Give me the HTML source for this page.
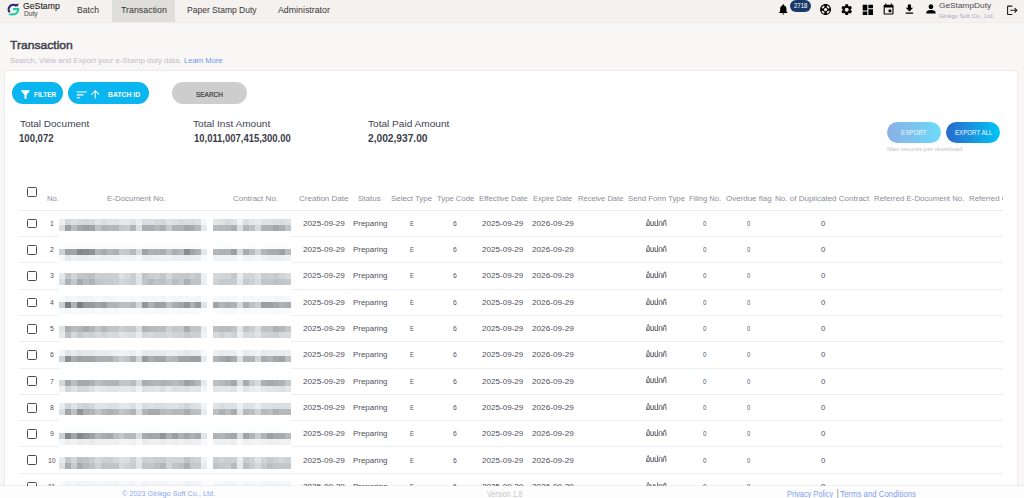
<!DOCTYPE html>
<html><head><meta charset="utf-8"><title>Transaction</title>
<style>
html,body{margin:0;padding:0}
body{width:1024px;height:498px;overflow:hidden;position:relative;background:#f8f7f5;font-family:"Liberation Sans",sans-serif}
.t{position:absolute;white-space:nowrap;transform-origin:0 0;z-index:5}
#hdr{position:absolute;left:0;top:0;width:1024px;height:22px;background:#f4f1ee;box-shadow:0 1px 1px rgba(0,0,0,.035)}
#tab{position:absolute;left:112px;top:0;width:63px;height:22px;background:#dfdedb}
.ic{position:absolute;z-index:6}
#badge{position:absolute;left:789.6px;top:-0.5px;width:21.1px;height:12.6px;border-radius:6.3px;background:#1b3a6c;z-index:4}
#card{position:absolute;left:4px;top:70px;width:1012px;height:440px;background:#fff;border:1px solid #ececf1;border-radius:4px;box-shadow:0 0 2px rgba(40,40,80,.06)}
.btn{position:absolute;top:82px;height:22px;border-radius:11px}
.cb{position:absolute;left:26.9px;width:7.8px;height:7.8px;border:1.25px solid #4a4a4c;border-radius:1.6px;z-index:6;margin-top:-0.2px}
.rl{position:absolute;left:19px;width:984px;height:1px;background:#eeeff5}
#hl{position:absolute;left:19px;top:210px;width:984px;height:1px;background:#e9eaf2}
i{position:absolute;display:block;z-index:3}
#blurbg1{position:absolute;left:59.3px;top:211.5px;width:231.3px;height:261px;background:#fff;z-index:2}
#blurbg2{position:absolute;left:213.1px;top:213px;width:77.6px;height:273px;background:#fff;z-index:2}
.thai{position:absolute;left:646px;z-index:5}
#clip{position:absolute;left:0;top:0;width:1003px;height:498px;overflow:hidden;z-index:5}
#footer{position:absolute;left:0;top:486px;width:1024px;height:12px;background:#fdfdfd;box-shadow:0 -1px 1px rgba(0,0,0,.05);z-index:20}
#footer .t{z-index:21}
#rstrip{position:absolute;left:1018px;top:60px;width:7px;height:430px;background:#f8f7f5;z-index:8}
#hcover{position:absolute;left:1003px;top:185px;width:14px;height:22px;background:#fff;border-right:1px solid #ececf1;z-index:7}
</style></head><body>
<svg width="0" height="0" style="position:absolute">
<defs>
<g id="th" fill="none" stroke="#5c5c68" stroke-width="0.9" stroke-linecap="round" stroke-linejoin="round">
<path d="M0.9 3.2 V6.6 M0.9 4.4 q-0.9 0.3 0 1 M0.9 6.6 H3.2 V2.6"/>
<path d="M1.2 1.9 q0.9-0.7 1.6 0 M2.2 0.4 v0.9"/>
<path d="M4.8 2.6 V6.6 H7.4 V2.6"/>
<path d="M9.0 2.6 V6.6 H11.6 V0.9"/>
<path d="M13.2 6.6 V3.3 q0-0.8 1.2-0.8 h0.4 q1.1 0 1.1 1.1 V6.6"/>
<path d="M17.1 6.6 V3.5 q0-1 1.4-1 q1.5 0 1.5 1.2 V6.6 M17.1 5.2 q0.9 0.3 0.9-0.6"/>
<path d="M17.8 1.6 q1-1.3 2.3-0.1"/>
</g>
</defs></svg>
<div id="hdr"></div>
<div id="tab"></div>
<!-- logo -->
<svg class="ic" style="left:4px;top:1px" width="20" height="18" viewBox="0 0 20 18">
<path d="M12.16 4.88 A4.6 4.6 0 0 0 5.68 11.36" fill="none" stroke="#27257c" stroke-width="2.1"/>
<path d="M11.0 3.4 L14.8 2.6 L13.3 5.9 Z" fill="#27257c"/>
<path d="M9.2 7.0 H15.3 C15.4 11.8 12.6 14.5 8.8 14.5 C7 14.5 5.4 14.1 4.2 13.5 C5.5 12.8 7 12.3 8.8 12.3 C11.2 12.3 12.8 11.2 13.1 9.2 H8.6 Z" fill="#20c9a7"/>
</svg>
<!-- bell -->
<svg class="ic" style="left:776.6px;top:3.4px" width="12.6" height="12.6" viewBox="0 0 24 24"><path d="M12 22c1.1 0 2-.9 2-2h-4c0 1.1.89 2 2 2zm6-6v-5c0-3.07-1.64-5.64-4.5-6.32V4c0-.83-.67-1.5-1.5-1.5s-1.5.67-1.5 1.5v.68C7.63 5.36 6 7.92 6 11v5l-2 2v1h16v-1l-2-2z" fill="#000"/></svg>
<div id="badge"></div>
<!-- lifebuoy -->
<svg class="ic" style="left:818.8px;top:2.8px" width="13.2" height="13.2" viewBox="0 0 24 24"><path d="M12 2C6.48 2 2 6.48 2 12s4.48 10 10 10 10-4.48 10-10S17.52 2 12 2zm7.46 7.12-2.78 1.15c-.51-1.36-1.580-2.44-2.95-2.94l1.15-2.78c2.1.8 3.77 2.47 4.58 4.57zM12 15c-1.66 0-3-1.34-3-3s1.34-3 3-3 3 1.34 3 3-1.34 3-3 3zM9.13 4.54l1.17 2.78c-1.38.5-2.47 1.59-2.98 2.97L4.54 9.13c.81-2.11 2.48-3.78 4.59-4.590zM4.54 14.87l2.78-1.15c.51 1.38 1.59 2.46 2.97 2.96l-1.17 2.78c-2.1-.81-3.77-2.48-4.58-4.59zm10.34 4.59-1.15-2.78c1.37-.51 2.45-1.59 2.95-2.97l2.78 1.17c-.81 2.1-2.48 3.77-4.58 4.58z" fill="#000"/></svg>
<!-- gear -->
<svg class="ic" style="left:839.5px;top:2.8px" width="13.4" height="13.4" viewBox="0 0 24 24"><path d="M19.14 12.94c.04-.3.06-.61.06-.94 0-.32-.02-.64-.07-.94l2.03-1.580c.18-.14.23-.41.12-.61l-1.92-3.32c-.12-.22-.37-.29-.59-.22l-2.39.96c-.5-.38-1.03-.7-1.62-.94l-.36-2.54c-.04-.24-.24-.41-.48-.41h-3.84c-.24 0-.43.17-.47.41l-.36 2.54c-.59.24-1.13.57-1.62.94l-2.39-.96c-.22-.08-.47 0-.59.22L2.74 8.87c-.12.21-.08.47.12.61l2.03 1.58c-.05.3-.09.63-.09.94s.02.64.07.94l-2.03 1.58c-.18.14-.23.41-.12.61l1.92 3.32c.12.22.37.29.59.22l2.39-.96c.5.38 1.03.7 1.62.94l.36 2.54c.05.24.24.41.48.41h3.84c.24 0 .44-.17.47-.41l.36-2.54c.59-.24 1.13-.56 1.62-.94l2.39.96c.22.08.47 0 .59-.22l1.92-3.32c.12-.22.07-.47-.12-.61l-2.01-1.58zM12 15.6c-1.98 0-3.6-1.62-3.6-3.6s1.62-3.6 3.6-3.6 3.6 1.62 3.6 3.6-1.62 3.6-3.6 3.6z" fill="#000"/></svg>
<!-- dashboard -->
<svg class="ic" style="left:860.5px;top:3.1px" width="13.7" height="13.7" viewBox="0 0 24 24"><path d="M3 13h8V3H3v10zm0 8h8v-6H3v6zm10 0h8V11h-8v10zm0-18v6h8V3h-8z" fill="#000"/></svg>
<!-- calendar -->
<svg class="ic" style="left:882px;top:2.95px" width="13.2" height="13.2" viewBox="0 0 24 24"><path d="M17 12h-5v5h5v-5zM16 1v2H8V1H6v2H5c-1.11 0-1.99.9-1.99 2L3 19c0 1.1.89 2 2 2h14c1.1 0 2-.9 2-2V5c0-1.1-.9-2-2-2h-1V1h-2zm3 18H5V8h14v11z" fill="#000"/></svg>
<!-- download -->
<svg class="ic" style="left:902.9px;top:3.2px" width="12.8" height="12.8" viewBox="0 0 24 24"><path d="M19 9h-4V3H9v6H5l7 7 7-7zM5 18v2h14v-2H5z" fill="#000"/></svg>
<!-- person -->
<svg class="ic" style="left:923.6px;top:1.8px" width="13.9" height="13.9" viewBox="0 0 24 24"><path d="M12 12c2.21 0 4-1.79 4-4s-1.790-4-4-4-4 1.79-4 4 1.79 4 4 4zm0 2c-2.67 0-8 1.34-8 4v2h16v-2c0-2.66-5.33-4-8-4z" fill="#000"/></svg>
<!-- logout -->
<svg class="ic" style="left:1006.4px;top:3.9px" width="12.7" height="12.7" viewBox="0 0 24 24"><path d="M17 7l-1.41 1.41L18.17 11H8v2h10.17l-2.58 2.58L17 17l5-5zM4 5h8V3H4c-1.1 0-2 .9-2 2v14c0 1.1.9 2 2 2h8v-2H4V5z" fill="#1a1a1a"/></svg>

<div id="card"></div>
<div id="rstrip"></div><div id="hcover"></div>
<div class="btn" style="left:12px;width:51px;background:#0bb5ef"></div>
<div class="btn" style="left:68px;width:81px;background:#0bb5ef"></div>
<div class="btn" style="left:171.7px;width:75.5px;background:#cdcdcd"></div>
<svg class="ic" style="left:19.2px;top:87.8px" width="13" height="13" viewBox="0 0 24 24"><path d="M4.25 5.61C6.27 8.2 10 13 10 13v6c0 .55.45 1 1 1h2c.55 0 1-.45 1-1v-6s3.72-4.8 5.74-7.390c.51-.66.04-1.61-.79-1.610H5.04c-.83 0-1.3.95-.79 1.61z" fill="#fff"/></svg>
<svg class="ic" style="left:75.2px;top:87.6px" width="13.7" height="13.7" viewBox="0 0 24 24"><path d="M3 18h6v-2H3v2zM3 6v2h18V6H3zm0 7h12v-2H3v2z" fill="#fff"/></svg>
<svg class="ic" style="left:88.9px;top:87.9px" width="12.5" height="12.5" viewBox="0 0 24 24"><path d="M4 12l1.41 1.41L11 7.83V20h2V7.83l5.58 5.59L20 12l-8-8-8 8z" fill="#fff"/></svg>
<div class="btn" style="left:887px;top:122.3px;width:54px;height:20.7px;border-radius:10.4px;background:linear-gradient(90deg,#8aaee6,#6cdbf8)"></div>
<div class="btn" style="left:946.2px;top:122.3px;width:54px;height:20.7px;border-radius:10.4px;background:linear-gradient(90deg,#2a68cd,#01c5f5)"></div>

<div id="hl"></div>
<div class="cb" style="top:187.5px"></div>
<div id="blurbg1"></div>
<div class="cb" style="top:218.80px"></div>
<div class="rl" style="top:236.00px"></div>
<svg class="thai" style="top:218.60px" viewBox="0 0 21 7.4" width="21" height="7.4"><use href="#th"/></svg>
<div class="cb" style="top:245.11px"></div>
<div class="rl" style="top:262.31px"></div>
<svg class="thai" style="top:244.91px" viewBox="0 0 21 7.4" width="21" height="7.4"><use href="#th"/></svg>
<div class="cb" style="top:271.42px"></div>
<div class="rl" style="top:288.62px"></div>
<svg class="thai" style="top:271.22px" viewBox="0 0 21 7.4" width="21" height="7.4"><use href="#th"/></svg>
<div class="cb" style="top:297.73px"></div>
<div class="rl" style="top:314.93px"></div>
<svg class="thai" style="top:297.53px" viewBox="0 0 21 7.4" width="21" height="7.4"><use href="#th"/></svg>
<div class="cb" style="top:324.04px"></div>
<div class="rl" style="top:341.24px"></div>
<svg class="thai" style="top:323.84px" viewBox="0 0 21 7.4" width="21" height="7.4"><use href="#th"/></svg>
<div class="cb" style="top:350.35px"></div>
<div class="rl" style="top:367.55px"></div>
<svg class="thai" style="top:350.15px" viewBox="0 0 21 7.4" width="21" height="7.4"><use href="#th"/></svg>
<div class="cb" style="top:376.66px"></div>
<div class="rl" style="top:393.86px"></div>
<svg class="thai" style="top:376.46px" viewBox="0 0 21 7.4" width="21" height="7.4"><use href="#th"/></svg>
<div class="cb" style="top:402.97px"></div>
<div class="rl" style="top:420.17px"></div>
<svg class="thai" style="top:402.77px" viewBox="0 0 21 7.4" width="21" height="7.4"><use href="#th"/></svg>
<div class="cb" style="top:429.28px"></div>
<div class="rl" style="top:446.48px"></div>
<svg class="thai" style="top:429.08px" viewBox="0 0 21 7.4" width="21" height="7.4"><use href="#th"/></svg>
<div class="cb" style="top:455.59px"></div>
<div class="rl" style="top:472.79px"></div>
<svg class="thai" style="top:455.39px" viewBox="0 0 21 7.4" width="21" height="7.4"><use href="#th"/></svg>
<div class="cb" style="top:481.90px"></div>
<div class="rl" style="top:499.10px"></div>
<svg class="thai" style="top:481.70px" viewBox="0 0 21 7.4" width="21" height="7.4"><use href="#th"/></svg>
<i style="left:59.30px;top:219.20px;width:6.02px;height:6.04px;background:rgb(236,239,242)"></i>
<i style="left:65.22px;top:219.20px;width:6.02px;height:6.04px;background:rgb(214,217,220)"></i>
<i style="left:71.14px;top:219.20px;width:6.02px;height:6.04px;background:rgb(220,223,226)"></i>
<i style="left:77.06px;top:219.20px;width:6.02px;height:6.04px;background:rgb(215,218,221)"></i>
<i style="left:82.98px;top:219.20px;width:6.02px;height:6.04px;background:rgb(212,215,218)"></i>
<i style="left:88.90px;top:219.20px;width:6.02px;height:6.04px;background:rgb(215,218,221)"></i>
<i style="left:94.82px;top:219.20px;width:6.02px;height:6.04px;background:rgb(226,229,232)"></i>
<i style="left:100.74px;top:219.20px;width:6.02px;height:6.04px;background:rgb(219,222,225)"></i>
<i style="left:106.66px;top:219.20px;width:6.02px;height:6.04px;background:rgb(225,228,231)"></i>
<i style="left:112.58px;top:219.20px;width:6.02px;height:6.04px;background:rgb(223,226,229)"></i>
<i style="left:118.50px;top:219.20px;width:6.02px;height:6.04px;background:rgb(231,234,237)"></i>
<i style="left:124.42px;top:219.20px;width:6.02px;height:6.04px;background:rgb(230,233,236)"></i>
<i style="left:130.34px;top:219.20px;width:6.02px;height:6.04px;background:rgb(223,226,229)"></i>
<i style="left:136.26px;top:219.20px;width:6.02px;height:6.04px;background:rgb(235,238,241)"></i>
<i style="left:142.18px;top:219.20px;width:6.02px;height:6.04px;background:rgb(219,222,225)"></i>
<i style="left:148.10px;top:219.20px;width:6.02px;height:6.04px;background:rgb(221,224,227)"></i>
<i style="left:154.02px;top:219.20px;width:6.02px;height:6.04px;background:rgb(215,218,221)"></i>
<i style="left:159.94px;top:219.20px;width:6.02px;height:6.04px;background:rgb(212,215,218)"></i>
<i style="left:165.86px;top:219.20px;width:6.02px;height:6.04px;background:rgb(224,227,230)"></i>
<i style="left:171.78px;top:219.20px;width:6.02px;height:6.04px;background:rgb(220,223,226)"></i>
<i style="left:177.70px;top:219.20px;width:6.02px;height:6.04px;background:rgb(215,218,221)"></i>
<i style="left:183.62px;top:219.20px;width:6.02px;height:6.04px;background:rgb(218,221,224)"></i>
<i style="left:189.54px;top:219.20px;width:6.02px;height:6.04px;background:rgb(215,218,221)"></i>
<i style="left:195.46px;top:219.20px;width:6.02px;height:6.04px;background:rgb(221,224,227)"></i>
<i style="left:201.38px;top:219.20px;width:6.02px;height:6.04px;background:rgb(243,246,249)"></i>
<i style="left:213.10px;top:219.20px;width:6.07px;height:6.04px;background:rgb(226,229,232)"></i>
<i style="left:219.07px;top:219.20px;width:6.07px;height:6.04px;background:rgb(223,226,229)"></i>
<i style="left:225.04px;top:219.20px;width:6.07px;height:6.04px;background:rgb(216,219,222)"></i>
<i style="left:231.01px;top:219.20px;width:6.07px;height:6.04px;background:rgb(222,225,228)"></i>
<i style="left:236.98px;top:219.20px;width:6.07px;height:6.04px;background:rgb(239,242,245)"></i>
<i style="left:242.95px;top:219.20px;width:6.07px;height:6.04px;background:rgb(218,221,224)"></i>
<i style="left:248.92px;top:219.20px;width:6.07px;height:6.04px;background:rgb(227,230,233)"></i>
<i style="left:254.89px;top:219.20px;width:6.07px;height:6.04px;background:rgb(233,236,239)"></i>
<i style="left:260.86px;top:219.20px;width:6.07px;height:6.04px;background:rgb(224,227,230)"></i>
<i style="left:266.83px;top:219.20px;width:6.07px;height:6.04px;background:rgb(223,226,229)"></i>
<i style="left:272.80px;top:219.20px;width:6.07px;height:6.04px;background:rgb(220,223,226)"></i>
<i style="left:278.77px;top:219.20px;width:6.07px;height:6.04px;background:rgb(218,221,224)"></i>
<i style="left:284.74px;top:219.20px;width:6.07px;height:6.04px;background:rgb(224,227,230)"></i>
<i style="left:59.30px;top:225.14px;width:6.02px;height:6.04px;background:rgb(218,221,224)"></i>
<i style="left:65.22px;top:225.14px;width:6.02px;height:6.04px;background:rgb(157,160,163)"></i>
<i style="left:71.14px;top:225.14px;width:6.02px;height:6.04px;background:rgb(185,188,191)"></i>
<i style="left:77.06px;top:225.14px;width:6.02px;height:6.04px;background:rgb(164,167,170)"></i>
<i style="left:82.98px;top:225.14px;width:6.02px;height:6.04px;background:rgb(157,160,163)"></i>
<i style="left:88.90px;top:225.14px;width:6.02px;height:6.04px;background:rgb(162,165,168)"></i>
<i style="left:94.82px;top:225.14px;width:6.02px;height:6.04px;background:rgb(192,195,198)"></i>
<i style="left:100.74px;top:225.14px;width:6.02px;height:6.04px;background:rgb(177,180,183)"></i>
<i style="left:106.66px;top:225.14px;width:6.02px;height:6.04px;background:rgb(182,185,188)"></i>
<i style="left:112.58px;top:225.14px;width:6.02px;height:6.04px;background:rgb(180,183,186)"></i>
<i style="left:118.50px;top:225.14px;width:6.02px;height:6.04px;background:rgb(196,199,202)"></i>
<i style="left:124.42px;top:225.14px;width:6.02px;height:6.04px;background:rgb(201,204,207)"></i>
<i style="left:130.34px;top:225.14px;width:6.02px;height:6.04px;background:rgb(177,180,183)"></i>
<i style="left:136.26px;top:225.14px;width:6.02px;height:6.04px;background:rgb(221,224,227)"></i>
<i style="left:142.18px;top:225.14px;width:6.02px;height:6.04px;background:rgb(172,175,178)"></i>
<i style="left:148.10px;top:225.14px;width:6.02px;height:6.04px;background:rgb(171,174,177)"></i>
<i style="left:154.02px;top:225.14px;width:6.02px;height:6.04px;background:rgb(182,185,188)"></i>
<i style="left:159.94px;top:225.14px;width:6.02px;height:6.04px;background:rgb(174,177,180)"></i>
<i style="left:165.86px;top:225.14px;width:6.02px;height:6.04px;background:rgb(199,202,205)"></i>
<i style="left:171.78px;top:225.14px;width:6.02px;height:6.04px;background:rgb(177,180,183)"></i>
<i style="left:177.70px;top:225.14px;width:6.02px;height:6.04px;background:rgb(175,178,181)"></i>
<i style="left:183.62px;top:225.14px;width:6.02px;height:6.04px;background:rgb(163,166,169)"></i>
<i style="left:189.54px;top:225.14px;width:6.02px;height:6.04px;background:rgb(169,172,175)"></i>
<i style="left:195.46px;top:225.14px;width:6.02px;height:6.04px;background:rgb(183,186,189)"></i>
<i style="left:201.38px;top:225.14px;width:6.02px;height:6.04px;background:rgb(229,232,235)"></i>
<i style="left:213.10px;top:225.14px;width:6.07px;height:6.04px;background:rgb(185,188,191)"></i>
<i style="left:219.07px;top:225.14px;width:6.07px;height:6.04px;background:rgb(182,185,188)"></i>
<i style="left:225.04px;top:225.14px;width:6.07px;height:6.04px;background:rgb(180,183,186)"></i>
<i style="left:231.01px;top:225.14px;width:6.07px;height:6.04px;background:rgb(172,175,178)"></i>
<i style="left:236.98px;top:225.14px;width:6.07px;height:6.04px;background:rgb(220,223,226)"></i>
<i style="left:242.95px;top:225.14px;width:6.07px;height:6.04px;background:rgb(181,184,187)"></i>
<i style="left:248.92px;top:225.14px;width:6.07px;height:6.04px;background:rgb(191,194,197)"></i>
<i style="left:254.89px;top:225.14px;width:6.07px;height:6.04px;background:rgb(216,219,222)"></i>
<i style="left:260.86px;top:225.14px;width:6.07px;height:6.04px;background:rgb(177,180,183)"></i>
<i style="left:266.83px;top:225.14px;width:6.07px;height:6.04px;background:rgb(175,178,181)"></i>
<i style="left:272.80px;top:225.14px;width:6.07px;height:6.04px;background:rgb(164,167,170)"></i>
<i style="left:278.77px;top:225.14px;width:6.07px;height:6.04px;background:rgb(174,177,180)"></i>
<i style="left:284.74px;top:225.14px;width:6.07px;height:6.04px;background:rgb(194,197,200)"></i>
<i style="left:59.30px;top:242.96px;width:6.02px;height:6.04px;background:rgb(252,255,258)"></i>
<i style="left:65.22px;top:242.96px;width:6.02px;height:6.04px;background:rgb(251,254,257)"></i>
<i style="left:71.14px;top:242.96px;width:6.02px;height:6.04px;background:rgb(251,254,257)"></i>
<i style="left:77.06px;top:242.96px;width:6.02px;height:6.04px;background:rgb(251,254,257)"></i>
<i style="left:82.98px;top:242.96px;width:6.02px;height:6.04px;background:rgb(251,254,257)"></i>
<i style="left:88.90px;top:242.96px;width:6.02px;height:6.04px;background:rgb(251,254,257)"></i>
<i style="left:94.82px;top:242.96px;width:6.02px;height:6.04px;background:rgb(251,254,257)"></i>
<i style="left:100.74px;top:242.96px;width:6.02px;height:6.04px;background:rgb(251,254,257)"></i>
<i style="left:106.66px;top:242.96px;width:6.02px;height:6.04px;background:rgb(251,254,257)"></i>
<i style="left:112.58px;top:242.96px;width:6.02px;height:6.04px;background:rgb(251,254,257)"></i>
<i style="left:118.50px;top:242.96px;width:6.02px;height:6.04px;background:rgb(251,254,257)"></i>
<i style="left:124.42px;top:242.96px;width:6.02px;height:6.04px;background:rgb(251,254,257)"></i>
<i style="left:130.34px;top:242.96px;width:6.02px;height:6.04px;background:rgb(251,254,257)"></i>
<i style="left:136.26px;top:242.96px;width:6.02px;height:6.04px;background:rgb(252,255,258)"></i>
<i style="left:142.18px;top:242.96px;width:6.02px;height:6.04px;background:rgb(251,254,257)"></i>
<i style="left:148.10px;top:242.96px;width:6.02px;height:6.04px;background:rgb(251,254,257)"></i>
<i style="left:154.02px;top:242.96px;width:6.02px;height:6.04px;background:rgb(251,254,257)"></i>
<i style="left:159.94px;top:242.96px;width:6.02px;height:6.04px;background:rgb(251,254,257)"></i>
<i style="left:165.86px;top:242.96px;width:6.02px;height:6.04px;background:rgb(251,254,257)"></i>
<i style="left:171.78px;top:242.96px;width:6.02px;height:6.04px;background:rgb(251,254,257)"></i>
<i style="left:177.70px;top:242.96px;width:6.02px;height:6.04px;background:rgb(251,254,257)"></i>
<i style="left:183.62px;top:242.96px;width:6.02px;height:6.04px;background:rgb(251,254,257)"></i>
<i style="left:189.54px;top:242.96px;width:6.02px;height:6.04px;background:rgb(251,254,257)"></i>
<i style="left:195.46px;top:242.96px;width:6.02px;height:6.04px;background:rgb(251,254,257)"></i>
<i style="left:201.38px;top:242.96px;width:6.02px;height:6.04px;background:rgb(252,255,258)"></i>
<i style="left:213.10px;top:242.96px;width:6.07px;height:6.04px;background:rgb(251,254,257)"></i>
<i style="left:219.07px;top:242.96px;width:6.07px;height:6.04px;background:rgb(251,254,257)"></i>
<i style="left:225.04px;top:242.96px;width:6.07px;height:6.04px;background:rgb(251,254,257)"></i>
<i style="left:231.01px;top:242.96px;width:6.07px;height:6.04px;background:rgb(251,254,257)"></i>
<i style="left:236.98px;top:242.96px;width:6.07px;height:6.04px;background:rgb(252,255,258)"></i>
<i style="left:242.95px;top:242.96px;width:6.07px;height:6.04px;background:rgb(251,254,257)"></i>
<i style="left:248.92px;top:242.96px;width:6.07px;height:6.04px;background:rgb(251,254,257)"></i>
<i style="left:254.89px;top:242.96px;width:6.07px;height:6.04px;background:rgb(252,255,258)"></i>
<i style="left:260.86px;top:242.96px;width:6.07px;height:6.04px;background:rgb(251,254,257)"></i>
<i style="left:266.83px;top:242.96px;width:6.07px;height:6.04px;background:rgb(251,254,257)"></i>
<i style="left:272.80px;top:242.96px;width:6.07px;height:6.04px;background:rgb(251,254,257)"></i>
<i style="left:278.77px;top:242.96px;width:6.07px;height:6.04px;background:rgb(251,254,257)"></i>
<i style="left:284.74px;top:242.96px;width:6.07px;height:6.04px;background:rgb(251,254,257)"></i>
<i style="left:59.30px;top:248.90px;width:6.02px;height:6.04px;background:rgb(207,210,213)"></i>
<i style="left:65.22px;top:248.90px;width:6.02px;height:6.04px;background:rgb(158,161,164)"></i>
<i style="left:71.14px;top:248.90px;width:6.02px;height:6.04px;background:rgb(163,166,169)"></i>
<i style="left:77.06px;top:248.90px;width:6.02px;height:6.04px;background:rgb(133,136,139)"></i>
<i style="left:82.98px;top:248.90px;width:6.02px;height:6.04px;background:rgb(137,140,143)"></i>
<i style="left:88.90px;top:248.90px;width:6.02px;height:6.04px;background:rgb(143,146,149)"></i>
<i style="left:94.82px;top:248.90px;width:6.02px;height:6.04px;background:rgb(178,181,184)"></i>
<i style="left:100.74px;top:248.90px;width:6.02px;height:6.04px;background:rgb(168,171,174)"></i>
<i style="left:106.66px;top:248.90px;width:6.02px;height:6.04px;background:rgb(180,183,186)"></i>
<i style="left:112.58px;top:248.90px;width:6.02px;height:6.04px;background:rgb(173,176,179)"></i>
<i style="left:118.50px;top:248.90px;width:6.02px;height:6.04px;background:rgb(199,202,205)"></i>
<i style="left:124.42px;top:248.90px;width:6.02px;height:6.04px;background:rgb(196,199,202)"></i>
<i style="left:130.34px;top:248.90px;width:6.02px;height:6.04px;background:rgb(182,185,188)"></i>
<i style="left:136.26px;top:248.90px;width:6.02px;height:6.04px;background:rgb(215,218,221)"></i>
<i style="left:142.18px;top:248.90px;width:6.02px;height:6.04px;background:rgb(160,163,166)"></i>
<i style="left:148.10px;top:248.90px;width:6.02px;height:6.04px;background:rgb(175,178,181)"></i>
<i style="left:154.02px;top:248.90px;width:6.02px;height:6.04px;background:rgb(173,176,179)"></i>
<i style="left:159.94px;top:248.90px;width:6.02px;height:6.04px;background:rgb(169,172,175)"></i>
<i style="left:165.86px;top:248.90px;width:6.02px;height:6.04px;background:rgb(189,192,195)"></i>
<i style="left:171.78px;top:248.90px;width:6.02px;height:6.04px;background:rgb(171,174,177)"></i>
<i style="left:177.70px;top:248.90px;width:6.02px;height:6.04px;background:rgb(180,183,186)"></i>
<i style="left:183.62px;top:248.90px;width:6.02px;height:6.04px;background:rgb(138,141,144)"></i>
<i style="left:189.54px;top:248.90px;width:6.02px;height:6.04px;background:rgb(161,164,167)"></i>
<i style="left:195.46px;top:248.90px;width:6.02px;height:6.04px;background:rgb(174,177,180)"></i>
<i style="left:201.38px;top:248.90px;width:6.02px;height:6.04px;background:rgb(229,232,235)"></i>
<i style="left:213.10px;top:248.90px;width:6.07px;height:6.04px;background:rgb(179,182,185)"></i>
<i style="left:219.07px;top:248.90px;width:6.07px;height:6.04px;background:rgb(174,177,180)"></i>
<i style="left:225.04px;top:248.90px;width:6.07px;height:6.04px;background:rgb(176,179,182)"></i>
<i style="left:231.01px;top:248.90px;width:6.07px;height:6.04px;background:rgb(157,160,163)"></i>
<i style="left:236.98px;top:248.90px;width:6.07px;height:6.04px;background:rgb(214,217,220)"></i>
<i style="left:242.95px;top:248.90px;width:6.07px;height:6.04px;background:rgb(168,171,174)"></i>
<i style="left:248.92px;top:248.90px;width:6.07px;height:6.04px;background:rgb(184,187,190)"></i>
<i style="left:254.89px;top:248.90px;width:6.07px;height:6.04px;background:rgb(209,212,215)"></i>
<i style="left:260.86px;top:248.90px;width:6.07px;height:6.04px;background:rgb(178,181,184)"></i>
<i style="left:266.83px;top:248.90px;width:6.07px;height:6.04px;background:rgb(169,172,175)"></i>
<i style="left:272.80px;top:248.90px;width:6.07px;height:6.04px;background:rgb(168,171,174)"></i>
<i style="left:278.77px;top:248.90px;width:6.07px;height:6.04px;background:rgb(160,163,166)"></i>
<i style="left:284.74px;top:248.90px;width:6.07px;height:6.04px;background:rgb(186,189,192)"></i>
<i style="left:59.30px;top:254.84px;width:6.02px;height:6.04px;background:rgb(246,249,252)"></i>
<i style="left:65.22px;top:254.84px;width:6.02px;height:6.04px;background:rgb(231,234,237)"></i>
<i style="left:71.14px;top:254.84px;width:6.02px;height:6.04px;background:rgb(238,241,244)"></i>
<i style="left:77.06px;top:254.84px;width:6.02px;height:6.04px;background:rgb(235,238,241)"></i>
<i style="left:82.98px;top:254.84px;width:6.02px;height:6.04px;background:rgb(234,237,240)"></i>
<i style="left:88.90px;top:254.84px;width:6.02px;height:6.04px;background:rgb(237,240,243)"></i>
<i style="left:94.82px;top:254.84px;width:6.02px;height:6.04px;background:rgb(239,242,245)"></i>
<i style="left:100.74px;top:254.84px;width:6.02px;height:6.04px;background:rgb(235,238,241)"></i>
<i style="left:106.66px;top:254.84px;width:6.02px;height:6.04px;background:rgb(237,240,243)"></i>
<i style="left:112.58px;top:254.84px;width:6.02px;height:6.04px;background:rgb(238,241,244)"></i>
<i style="left:118.50px;top:254.84px;width:6.02px;height:6.04px;background:rgb(242,245,248)"></i>
<i style="left:124.42px;top:254.84px;width:6.02px;height:6.04px;background:rgb(241,244,247)"></i>
<i style="left:130.34px;top:254.84px;width:6.02px;height:6.04px;background:rgb(240,243,246)"></i>
<i style="left:136.26px;top:254.84px;width:6.02px;height:6.04px;background:rgb(244,247,250)"></i>
<i style="left:142.18px;top:254.84px;width:6.02px;height:6.04px;background:rgb(235,238,241)"></i>
<i style="left:148.10px;top:254.84px;width:6.02px;height:6.04px;background:rgb(236,239,242)"></i>
<i style="left:154.02px;top:254.84px;width:6.02px;height:6.04px;background:rgb(237,240,243)"></i>
<i style="left:159.94px;top:254.84px;width:6.02px;height:6.04px;background:rgb(238,241,244)"></i>
<i style="left:165.86px;top:254.84px;width:6.02px;height:6.04px;background:rgb(239,242,245)"></i>
<i style="left:171.78px;top:254.84px;width:6.02px;height:6.04px;background:rgb(235,238,241)"></i>
<i style="left:177.70px;top:254.84px;width:6.02px;height:6.04px;background:rgb(236,239,242)"></i>
<i style="left:183.62px;top:254.84px;width:6.02px;height:6.04px;background:rgb(233,236,239)"></i>
<i style="left:189.54px;top:254.84px;width:6.02px;height:6.04px;background:rgb(236,239,242)"></i>
<i style="left:195.46px;top:254.84px;width:6.02px;height:6.04px;background:rgb(236,239,242)"></i>
<i style="left:201.38px;top:254.84px;width:6.02px;height:6.04px;background:rgb(248,251,254)"></i>
<i style="left:213.10px;top:254.84px;width:6.07px;height:6.04px;background:rgb(239,242,245)"></i>
<i style="left:219.07px;top:254.84px;width:6.07px;height:6.04px;background:rgb(239,242,245)"></i>
<i style="left:225.04px;top:254.84px;width:6.07px;height:6.04px;background:rgb(239,242,245)"></i>
<i style="left:231.01px;top:254.84px;width:6.07px;height:6.04px;background:rgb(239,242,245)"></i>
<i style="left:236.98px;top:254.84px;width:6.07px;height:6.04px;background:rgb(247,250,253)"></i>
<i style="left:242.95px;top:254.84px;width:6.07px;height:6.04px;background:rgb(239,242,245)"></i>
<i style="left:248.92px;top:254.84px;width:6.07px;height:6.04px;background:rgb(240,243,246)"></i>
<i style="left:254.89px;top:254.84px;width:6.07px;height:6.04px;background:rgb(243,246,249)"></i>
<i style="left:260.86px;top:254.84px;width:6.07px;height:6.04px;background:rgb(238,241,244)"></i>
<i style="left:266.83px;top:254.84px;width:6.07px;height:6.04px;background:rgb(235,238,241)"></i>
<i style="left:272.80px;top:254.84px;width:6.07px;height:6.04px;background:rgb(234,237,240)"></i>
<i style="left:278.77px;top:254.84px;width:6.07px;height:6.04px;background:rgb(236,239,242)"></i>
<i style="left:284.74px;top:254.84px;width:6.07px;height:6.04px;background:rgb(240,243,246)"></i>
<i style="left:59.30px;top:272.66px;width:6.02px;height:6.04px;background:rgb(230,233,236)"></i>
<i style="left:65.22px;top:272.66px;width:6.02px;height:6.04px;background:rgb(195,198,201)"></i>
<i style="left:71.14px;top:272.66px;width:6.02px;height:6.04px;background:rgb(211,214,217)"></i>
<i style="left:77.06px;top:272.66px;width:6.02px;height:6.04px;background:rgb(195,198,201)"></i>
<i style="left:82.98px;top:272.66px;width:6.02px;height:6.04px;background:rgb(192,195,198)"></i>
<i style="left:88.90px;top:272.66px;width:6.02px;height:6.04px;background:rgb(189,192,195)"></i>
<i style="left:94.82px;top:272.66px;width:6.02px;height:6.04px;background:rgb(204,207,210)"></i>
<i style="left:100.74px;top:272.66px;width:6.02px;height:6.04px;background:rgb(203,206,209)"></i>
<i style="left:106.66px;top:272.66px;width:6.02px;height:6.04px;background:rgb(204,207,210)"></i>
<i style="left:112.58px;top:272.66px;width:6.02px;height:6.04px;background:rgb(205,208,211)"></i>
<i style="left:118.50px;top:272.66px;width:6.02px;height:6.04px;background:rgb(222,225,228)"></i>
<i style="left:124.42px;top:272.66px;width:6.02px;height:6.04px;background:rgb(214,217,220)"></i>
<i style="left:130.34px;top:272.66px;width:6.02px;height:6.04px;background:rgb(203,206,209)"></i>
<i style="left:136.26px;top:272.66px;width:6.02px;height:6.04px;background:rgb(227,230,233)"></i>
<i style="left:142.18px;top:272.66px;width:6.02px;height:6.04px;background:rgb(193,196,199)"></i>
<i style="left:148.10px;top:272.66px;width:6.02px;height:6.04px;background:rgb(202,205,208)"></i>
<i style="left:154.02px;top:272.66px;width:6.02px;height:6.04px;background:rgb(205,208,211)"></i>
<i style="left:159.94px;top:272.66px;width:6.02px;height:6.04px;background:rgb(195,198,201)"></i>
<i style="left:165.86px;top:272.66px;width:6.02px;height:6.04px;background:rgb(213,216,219)"></i>
<i style="left:171.78px;top:272.66px;width:6.02px;height:6.04px;background:rgb(200,203,206)"></i>
<i style="left:177.70px;top:272.66px;width:6.02px;height:6.04px;background:rgb(198,201,204)"></i>
<i style="left:183.62px;top:272.66px;width:6.02px;height:6.04px;background:rgb(196,199,202)"></i>
<i style="left:189.54px;top:272.66px;width:6.02px;height:6.04px;background:rgb(204,207,210)"></i>
<i style="left:195.46px;top:272.66px;width:6.02px;height:6.04px;background:rgb(196,199,202)"></i>
<i style="left:201.38px;top:272.66px;width:6.02px;height:6.04px;background:rgb(237,240,243)"></i>
<i style="left:213.10px;top:272.66px;width:6.07px;height:6.04px;background:rgb(213,216,219)"></i>
<i style="left:219.07px;top:272.66px;width:6.07px;height:6.04px;background:rgb(211,214,217)"></i>
<i style="left:225.04px;top:272.66px;width:6.07px;height:6.04px;background:rgb(209,212,215)"></i>
<i style="left:231.01px;top:272.66px;width:6.07px;height:6.04px;background:rgb(198,201,204)"></i>
<i style="left:236.98px;top:272.66px;width:6.07px;height:6.04px;background:rgb(232,235,238)"></i>
<i style="left:242.95px;top:272.66px;width:6.07px;height:6.04px;background:rgb(209,212,215)"></i>
<i style="left:248.92px;top:272.66px;width:6.07px;height:6.04px;background:rgb(210,213,216)"></i>
<i style="left:254.89px;top:272.66px;width:6.07px;height:6.04px;background:rgb(221,224,227)"></i>
<i style="left:260.86px;top:272.66px;width:6.07px;height:6.04px;background:rgb(202,205,208)"></i>
<i style="left:266.83px;top:272.66px;width:6.07px;height:6.04px;background:rgb(205,208,211)"></i>
<i style="left:272.80px;top:272.66px;width:6.07px;height:6.04px;background:rgb(200,203,206)"></i>
<i style="left:278.77px;top:272.66px;width:6.07px;height:6.04px;background:rgb(210,213,216)"></i>
<i style="left:284.74px;top:272.66px;width:6.07px;height:6.04px;background:rgb(217,220,223)"></i>
<i style="left:59.30px;top:278.60px;width:6.02px;height:6.04px;background:rgb(219,222,225)"></i>
<i style="left:65.22px;top:278.60px;width:6.02px;height:6.04px;background:rgb(174,177,180)"></i>
<i style="left:71.14px;top:278.60px;width:6.02px;height:6.04px;background:rgb(197,200,203)"></i>
<i style="left:77.06px;top:278.60px;width:6.02px;height:6.04px;background:rgb(167,170,173)"></i>
<i style="left:82.98px;top:278.60px;width:6.02px;height:6.04px;background:rgb(183,186,189)"></i>
<i style="left:88.90px;top:278.60px;width:6.02px;height:6.04px;background:rgb(176,179,182)"></i>
<i style="left:94.82px;top:278.60px;width:6.02px;height:6.04px;background:rgb(194,197,200)"></i>
<i style="left:100.74px;top:278.60px;width:6.02px;height:6.04px;background:rgb(198,201,204)"></i>
<i style="left:106.66px;top:278.60px;width:6.02px;height:6.04px;background:rgb(200,203,206)"></i>
<i style="left:112.58px;top:278.60px;width:6.02px;height:6.04px;background:rgb(203,206,209)"></i>
<i style="left:118.50px;top:278.60px;width:6.02px;height:6.04px;background:rgb(213,216,219)"></i>
<i style="left:124.42px;top:278.60px;width:6.02px;height:6.04px;background:rgb(207,210,213)"></i>
<i style="left:130.34px;top:278.60px;width:6.02px;height:6.04px;background:rgb(203,206,209)"></i>
<i style="left:136.26px;top:278.60px;width:6.02px;height:6.04px;background:rgb(225,228,231)"></i>
<i style="left:142.18px;top:278.60px;width:6.02px;height:6.04px;background:rgb(194,197,200)"></i>
<i style="left:148.10px;top:278.60px;width:6.02px;height:6.04px;background:rgb(184,187,190)"></i>
<i style="left:154.02px;top:278.60px;width:6.02px;height:6.04px;background:rgb(192,195,198)"></i>
<i style="left:159.94px;top:278.60px;width:6.02px;height:6.04px;background:rgb(190,193,196)"></i>
<i style="left:165.86px;top:278.60px;width:6.02px;height:6.04px;background:rgb(202,205,208)"></i>
<i style="left:171.78px;top:278.60px;width:6.02px;height:6.04px;background:rgb(187,190,193)"></i>
<i style="left:177.70px;top:278.60px;width:6.02px;height:6.04px;background:rgb(196,199,202)"></i>
<i style="left:183.62px;top:278.60px;width:6.02px;height:6.04px;background:rgb(174,177,180)"></i>
<i style="left:189.54px;top:278.60px;width:6.02px;height:6.04px;background:rgb(192,195,198)"></i>
<i style="left:195.46px;top:278.60px;width:6.02px;height:6.04px;background:rgb(192,195,198)"></i>
<i style="left:201.38px;top:278.60px;width:6.02px;height:6.04px;background:rgb(235,238,241)"></i>
<i style="left:213.10px;top:278.60px;width:6.07px;height:6.04px;background:rgb(207,210,213)"></i>
<i style="left:219.07px;top:278.60px;width:6.07px;height:6.04px;background:rgb(198,201,204)"></i>
<i style="left:225.04px;top:278.60px;width:6.07px;height:6.04px;background:rgb(199,202,205)"></i>
<i style="left:231.01px;top:278.60px;width:6.07px;height:6.04px;background:rgb(202,205,208)"></i>
<i style="left:236.98px;top:278.60px;width:6.07px;height:6.04px;background:rgb(227,230,233)"></i>
<i style="left:242.95px;top:278.60px;width:6.07px;height:6.04px;background:rgb(200,203,206)"></i>
<i style="left:248.92px;top:278.60px;width:6.07px;height:6.04px;background:rgb(206,209,212)"></i>
<i style="left:254.89px;top:278.60px;width:6.07px;height:6.04px;background:rgb(217,220,223)"></i>
<i style="left:260.86px;top:278.60px;width:6.07px;height:6.04px;background:rgb(194,197,200)"></i>
<i style="left:266.83px;top:278.60px;width:6.07px;height:6.04px;background:rgb(196,199,202)"></i>
<i style="left:272.80px;top:278.60px;width:6.07px;height:6.04px;background:rgb(190,193,196)"></i>
<i style="left:278.77px;top:278.60px;width:6.07px;height:6.04px;background:rgb(194,197,200)"></i>
<i style="left:284.74px;top:278.60px;width:6.07px;height:6.04px;background:rgb(198,201,204)"></i>
<i style="left:59.30px;top:296.42px;width:6.02px;height:6.04px;background:rgb(248,251,254)"></i>
<i style="left:65.22px;top:296.42px;width:6.02px;height:6.04px;background:rgb(241,244,247)"></i>
<i style="left:71.14px;top:296.42px;width:6.02px;height:6.04px;background:rgb(245,248,251)"></i>
<i style="left:77.06px;top:296.42px;width:6.02px;height:6.04px;background:rgb(242,245,248)"></i>
<i style="left:82.98px;top:296.42px;width:6.02px;height:6.04px;background:rgb(241,244,247)"></i>
<i style="left:88.90px;top:296.42px;width:6.02px;height:6.04px;background:rgb(242,245,248)"></i>
<i style="left:94.82px;top:296.42px;width:6.02px;height:6.04px;background:rgb(245,248,251)"></i>
<i style="left:100.74px;top:296.42px;width:6.02px;height:6.04px;background:rgb(243,246,249)"></i>
<i style="left:106.66px;top:296.42px;width:6.02px;height:6.04px;background:rgb(243,246,249)"></i>
<i style="left:112.58px;top:296.42px;width:6.02px;height:6.04px;background:rgb(245,248,251)"></i>
<i style="left:118.50px;top:296.42px;width:6.02px;height:6.04px;background:rgb(246,249,252)"></i>
<i style="left:124.42px;top:296.42px;width:6.02px;height:6.04px;background:rgb(246,249,252)"></i>
<i style="left:130.34px;top:296.42px;width:6.02px;height:6.04px;background:rgb(245,248,251)"></i>
<i style="left:136.26px;top:296.42px;width:6.02px;height:6.04px;background:rgb(248,251,254)"></i>
<i style="left:142.18px;top:296.42px;width:6.02px;height:6.04px;background:rgb(243,246,249)"></i>
<i style="left:148.10px;top:296.42px;width:6.02px;height:6.04px;background:rgb(244,247,250)"></i>
<i style="left:154.02px;top:296.42px;width:6.02px;height:6.04px;background:rgb(243,246,249)"></i>
<i style="left:159.94px;top:296.42px;width:6.02px;height:6.04px;background:rgb(242,245,248)"></i>
<i style="left:165.86px;top:296.42px;width:6.02px;height:6.04px;background:rgb(245,248,251)"></i>
<i style="left:171.78px;top:296.42px;width:6.02px;height:6.04px;background:rgb(243,246,249)"></i>
<i style="left:177.70px;top:296.42px;width:6.02px;height:6.04px;background:rgb(243,246,249)"></i>
<i style="left:183.62px;top:296.42px;width:6.02px;height:6.04px;background:rgb(243,246,249)"></i>
<i style="left:189.54px;top:296.42px;width:6.02px;height:6.04px;background:rgb(244,247,250)"></i>
<i style="left:195.46px;top:296.42px;width:6.02px;height:6.04px;background:rgb(243,246,249)"></i>
<i style="left:201.38px;top:296.42px;width:6.02px;height:6.04px;background:rgb(249,252,255)"></i>
<i style="left:213.10px;top:296.42px;width:6.07px;height:6.04px;background:rgb(246,249,252)"></i>
<i style="left:219.07px;top:296.42px;width:6.07px;height:6.04px;background:rgb(245,248,251)"></i>
<i style="left:225.04px;top:296.42px;width:6.07px;height:6.04px;background:rgb(244,247,250)"></i>
<i style="left:231.01px;top:296.42px;width:6.07px;height:6.04px;background:rgb(245,248,251)"></i>
<i style="left:236.98px;top:296.42px;width:6.07px;height:6.04px;background:rgb(249,252,255)"></i>
<i style="left:242.95px;top:296.42px;width:6.07px;height:6.04px;background:rgb(245,248,251)"></i>
<i style="left:248.92px;top:296.42px;width:6.07px;height:6.04px;background:rgb(245,248,251)"></i>
<i style="left:254.89px;top:296.42px;width:6.07px;height:6.04px;background:rgb(247,250,253)"></i>
<i style="left:260.86px;top:296.42px;width:6.07px;height:6.04px;background:rgb(243,246,249)"></i>
<i style="left:266.83px;top:296.42px;width:6.07px;height:6.04px;background:rgb(245,248,251)"></i>
<i style="left:272.80px;top:296.42px;width:6.07px;height:6.04px;background:rgb(243,246,249)"></i>
<i style="left:278.77px;top:296.42px;width:6.07px;height:6.04px;background:rgb(244,247,250)"></i>
<i style="left:284.74px;top:296.42px;width:6.07px;height:6.04px;background:rgb(246,249,252)"></i>
<i style="left:59.30px;top:302.36px;width:6.02px;height:6.04px;background:rgb(203,206,209)"></i>
<i style="left:65.22px;top:302.36px;width:6.02px;height:6.04px;background:rgb(125,128,131)"></i>
<i style="left:71.14px;top:302.36px;width:6.02px;height:6.04px;background:rgb(177,180,183)"></i>
<i style="left:77.06px;top:302.36px;width:6.02px;height:6.04px;background:rgb(124,127,130)"></i>
<i style="left:82.98px;top:302.36px;width:6.02px;height:6.04px;background:rgb(149,152,155)"></i>
<i style="left:88.90px;top:302.36px;width:6.02px;height:6.04px;background:rgb(150,153,156)"></i>
<i style="left:94.82px;top:302.36px;width:6.02px;height:6.04px;background:rgb(162,165,168)"></i>
<i style="left:100.74px;top:302.36px;width:6.02px;height:6.04px;background:rgb(154,157,160)"></i>
<i style="left:106.66px;top:302.36px;width:6.02px;height:6.04px;background:rgb(177,180,183)"></i>
<i style="left:112.58px;top:302.36px;width:6.02px;height:6.04px;background:rgb(176,179,182)"></i>
<i style="left:118.50px;top:302.36px;width:6.02px;height:6.04px;background:rgb(189,192,195)"></i>
<i style="left:124.42px;top:302.36px;width:6.02px;height:6.04px;background:rgb(189,192,195)"></i>
<i style="left:130.34px;top:302.36px;width:6.02px;height:6.04px;background:rgb(180,183,186)"></i>
<i style="left:136.26px;top:302.36px;width:6.02px;height:6.04px;background:rgb(212,215,218)"></i>
<i style="left:142.18px;top:302.36px;width:6.02px;height:6.04px;background:rgb(147,150,153)"></i>
<i style="left:148.10px;top:302.36px;width:6.02px;height:6.04px;background:rgb(174,177,180)"></i>
<i style="left:154.02px;top:302.36px;width:6.02px;height:6.04px;background:rgb(156,159,162)"></i>
<i style="left:159.94px;top:302.36px;width:6.02px;height:6.04px;background:rgb(159,162,165)"></i>
<i style="left:165.86px;top:302.36px;width:6.02px;height:6.04px;background:rgb(189,192,195)"></i>
<i style="left:171.78px;top:302.36px;width:6.02px;height:6.04px;background:rgb(170,173,176)"></i>
<i style="left:177.70px;top:302.36px;width:6.02px;height:6.04px;background:rgb(163,166,169)"></i>
<i style="left:183.62px;top:302.36px;width:6.02px;height:6.04px;background:rgb(147,150,153)"></i>
<i style="left:189.54px;top:302.36px;width:6.02px;height:6.04px;background:rgb(174,177,180)"></i>
<i style="left:195.46px;top:302.36px;width:6.02px;height:6.04px;background:rgb(150,153,156)"></i>
<i style="left:201.38px;top:302.36px;width:6.02px;height:6.04px;background:rgb(224,227,230)"></i>
<i style="left:213.10px;top:302.36px;width:6.07px;height:6.04px;background:rgb(162,165,168)"></i>
<i style="left:219.07px;top:302.36px;width:6.07px;height:6.04px;background:rgb(179,182,185)"></i>
<i style="left:225.04px;top:302.36px;width:6.07px;height:6.04px;background:rgb(170,173,176)"></i>
<i style="left:231.01px;top:302.36px;width:6.07px;height:6.04px;background:rgb(176,179,182)"></i>
<i style="left:236.98px;top:302.36px;width:6.07px;height:6.04px;background:rgb(215,218,221)"></i>
<i style="left:242.95px;top:302.36px;width:6.07px;height:6.04px;background:rgb(171,174,177)"></i>
<i style="left:248.92px;top:302.36px;width:6.07px;height:6.04px;background:rgb(190,193,196)"></i>
<i style="left:254.89px;top:302.36px;width:6.07px;height:6.04px;background:rgb(203,206,209)"></i>
<i style="left:260.86px;top:302.36px;width:6.07px;height:6.04px;background:rgb(156,159,162)"></i>
<i style="left:266.83px;top:302.36px;width:6.07px;height:6.04px;background:rgb(155,158,161)"></i>
<i style="left:272.80px;top:302.36px;width:6.07px;height:6.04px;background:rgb(166,169,172)"></i>
<i style="left:278.77px;top:302.36px;width:6.07px;height:6.04px;background:rgb(175,178,181)"></i>
<i style="left:284.74px;top:302.36px;width:6.07px;height:6.04px;background:rgb(168,171,174)"></i>
<i style="left:59.30px;top:308.30px;width:6.02px;height:6.04px;background:rgb(249,252,255)"></i>
<i style="left:65.22px;top:308.30px;width:6.02px;height:6.04px;background:rgb(245,248,251)"></i>
<i style="left:71.14px;top:308.30px;width:6.02px;height:6.04px;background:rgb(248,251,254)"></i>
<i style="left:77.06px;top:308.30px;width:6.02px;height:6.04px;background:rgb(246,249,252)"></i>
<i style="left:82.98px;top:308.30px;width:6.02px;height:6.04px;background:rgb(245,248,251)"></i>
<i style="left:88.90px;top:308.30px;width:6.02px;height:6.04px;background:rgb(246,249,252)"></i>
<i style="left:94.82px;top:308.30px;width:6.02px;height:6.04px;background:rgb(248,251,254)"></i>
<i style="left:100.74px;top:308.30px;width:6.02px;height:6.04px;background:rgb(246,249,252)"></i>
<i style="left:106.66px;top:308.30px;width:6.02px;height:6.04px;background:rgb(247,250,253)"></i>
<i style="left:112.58px;top:308.30px;width:6.02px;height:6.04px;background:rgb(247,250,253)"></i>
<i style="left:118.50px;top:308.30px;width:6.02px;height:6.04px;background:rgb(249,252,255)"></i>
<i style="left:124.42px;top:308.30px;width:6.02px;height:6.04px;background:rgb(248,251,254)"></i>
<i style="left:130.34px;top:308.30px;width:6.02px;height:6.04px;background:rgb(248,251,254)"></i>
<i style="left:136.26px;top:308.30px;width:6.02px;height:6.04px;background:rgb(249,252,255)"></i>
<i style="left:142.18px;top:308.30px;width:6.02px;height:6.04px;background:rgb(246,249,252)"></i>
<i style="left:148.10px;top:308.30px;width:6.02px;height:6.04px;background:rgb(247,250,253)"></i>
<i style="left:154.02px;top:308.30px;width:6.02px;height:6.04px;background:rgb(246,249,252)"></i>
<i style="left:159.94px;top:308.30px;width:6.02px;height:6.04px;background:rgb(246,249,252)"></i>
<i style="left:165.86px;top:308.30px;width:6.02px;height:6.04px;background:rgb(248,251,254)"></i>
<i style="left:171.78px;top:308.30px;width:6.02px;height:6.04px;background:rgb(247,250,253)"></i>
<i style="left:177.70px;top:308.30px;width:6.02px;height:6.04px;background:rgb(247,250,253)"></i>
<i style="left:183.62px;top:308.30px;width:6.02px;height:6.04px;background:rgb(246,249,252)"></i>
<i style="left:189.54px;top:308.30px;width:6.02px;height:6.04px;background:rgb(247,250,253)"></i>
<i style="left:195.46px;top:308.30px;width:6.02px;height:6.04px;background:rgb(247,250,253)"></i>
<i style="left:201.38px;top:308.30px;width:6.02px;height:6.04px;background:rgb(251,254,257)"></i>
<i style="left:213.10px;top:308.30px;width:6.07px;height:6.04px;background:rgb(248,251,254)"></i>
<i style="left:219.07px;top:308.30px;width:6.07px;height:6.04px;background:rgb(247,250,253)"></i>
<i style="left:225.04px;top:308.30px;width:6.07px;height:6.04px;background:rgb(247,250,253)"></i>
<i style="left:231.01px;top:308.30px;width:6.07px;height:6.04px;background:rgb(246,249,252)"></i>
<i style="left:236.98px;top:308.30px;width:6.07px;height:6.04px;background:rgb(250,253,256)"></i>
<i style="left:242.95px;top:308.30px;width:6.07px;height:6.04px;background:rgb(247,250,253)"></i>
<i style="left:248.92px;top:308.30px;width:6.07px;height:6.04px;background:rgb(248,251,254)"></i>
<i style="left:254.89px;top:308.30px;width:6.07px;height:6.04px;background:rgb(249,252,255)"></i>
<i style="left:260.86px;top:308.30px;width:6.07px;height:6.04px;background:rgb(248,251,254)"></i>
<i style="left:266.83px;top:308.30px;width:6.07px;height:6.04px;background:rgb(247,250,253)"></i>
<i style="left:272.80px;top:308.30px;width:6.07px;height:6.04px;background:rgb(247,250,253)"></i>
<i style="left:278.77px;top:308.30px;width:6.07px;height:6.04px;background:rgb(247,250,253)"></i>
<i style="left:284.74px;top:308.30px;width:6.07px;height:6.04px;background:rgb(248,251,254)"></i>
<i style="left:59.30px;top:326.12px;width:6.02px;height:6.04px;background:rgb(223,226,229)"></i>
<i style="left:65.22px;top:326.12px;width:6.02px;height:6.04px;background:rgb(171,174,177)"></i>
<i style="left:71.14px;top:326.12px;width:6.02px;height:6.04px;background:rgb(185,188,191)"></i>
<i style="left:77.06px;top:326.12px;width:6.02px;height:6.04px;background:rgb(180,183,186)"></i>
<i style="left:82.98px;top:326.12px;width:6.02px;height:6.04px;background:rgb(168,171,174)"></i>
<i style="left:88.90px;top:326.12px;width:6.02px;height:6.04px;background:rgb(179,182,185)"></i>
<i style="left:94.82px;top:326.12px;width:6.02px;height:6.04px;background:rgb(195,198,201)"></i>
<i style="left:100.74px;top:326.12px;width:6.02px;height:6.04px;background:rgb(181,184,187)"></i>
<i style="left:106.66px;top:326.12px;width:6.02px;height:6.04px;background:rgb(193,196,199)"></i>
<i style="left:112.58px;top:326.12px;width:6.02px;height:6.04px;background:rgb(195,198,201)"></i>
<i style="left:118.50px;top:326.12px;width:6.02px;height:6.04px;background:rgb(204,207,210)"></i>
<i style="left:124.42px;top:326.12px;width:6.02px;height:6.04px;background:rgb(197,200,203)"></i>
<i style="left:130.34px;top:326.12px;width:6.02px;height:6.04px;background:rgb(197,200,203)"></i>
<i style="left:136.26px;top:326.12px;width:6.02px;height:6.04px;background:rgb(219,222,225)"></i>
<i style="left:142.18px;top:326.12px;width:6.02px;height:6.04px;background:rgb(176,179,182)"></i>
<i style="left:148.10px;top:326.12px;width:6.02px;height:6.04px;background:rgb(183,186,189)"></i>
<i style="left:154.02px;top:326.12px;width:6.02px;height:6.04px;background:rgb(185,188,191)"></i>
<i style="left:159.94px;top:326.12px;width:6.02px;height:6.04px;background:rgb(186,189,192)"></i>
<i style="left:165.86px;top:326.12px;width:6.02px;height:6.04px;background:rgb(206,209,212)"></i>
<i style="left:171.78px;top:326.12px;width:6.02px;height:6.04px;background:rgb(196,199,202)"></i>
<i style="left:177.70px;top:326.12px;width:6.02px;height:6.04px;background:rgb(198,201,204)"></i>
<i style="left:183.62px;top:326.12px;width:6.02px;height:6.04px;background:rgb(170,173,176)"></i>
<i style="left:189.54px;top:326.12px;width:6.02px;height:6.04px;background:rgb(192,195,198)"></i>
<i style="left:195.46px;top:326.12px;width:6.02px;height:6.04px;background:rgb(194,197,200)"></i>
<i style="left:201.38px;top:326.12px;width:6.02px;height:6.04px;background:rgb(236,239,242)"></i>
<i style="left:213.10px;top:326.12px;width:6.07px;height:6.04px;background:rgb(189,192,195)"></i>
<i style="left:219.07px;top:326.12px;width:6.07px;height:6.04px;background:rgb(185,188,191)"></i>
<i style="left:225.04px;top:326.12px;width:6.07px;height:6.04px;background:rgb(185,188,191)"></i>
<i style="left:231.01px;top:326.12px;width:6.07px;height:6.04px;background:rgb(192,195,198)"></i>
<i style="left:236.98px;top:326.12px;width:6.07px;height:6.04px;background:rgb(229,232,235)"></i>
<i style="left:242.95px;top:326.12px;width:6.07px;height:6.04px;background:rgb(193,196,199)"></i>
<i style="left:248.92px;top:326.12px;width:6.07px;height:6.04px;background:rgb(202,205,208)"></i>
<i style="left:254.89px;top:326.12px;width:6.07px;height:6.04px;background:rgb(219,222,225)"></i>
<i style="left:260.86px;top:326.12px;width:6.07px;height:6.04px;background:rgb(191,194,197)"></i>
<i style="left:266.83px;top:326.12px;width:6.07px;height:6.04px;background:rgb(192,195,198)"></i>
<i style="left:272.80px;top:326.12px;width:6.07px;height:6.04px;background:rgb(175,178,181)"></i>
<i style="left:278.77px;top:326.12px;width:6.07px;height:6.04px;background:rgb(181,184,187)"></i>
<i style="left:284.74px;top:326.12px;width:6.07px;height:6.04px;background:rgb(197,200,203)"></i>
<i style="left:59.30px;top:332.06px;width:6.02px;height:6.04px;background:rgb(232,235,238)"></i>
<i style="left:65.22px;top:332.06px;width:6.02px;height:6.04px;background:rgb(190,193,196)"></i>
<i style="left:71.14px;top:332.06px;width:6.02px;height:6.04px;background:rgb(214,217,220)"></i>
<i style="left:77.06px;top:332.06px;width:6.02px;height:6.04px;background:rgb(199,202,205)"></i>
<i style="left:82.98px;top:332.06px;width:6.02px;height:6.04px;background:rgb(208,211,214)"></i>
<i style="left:88.90px;top:332.06px;width:6.02px;height:6.04px;background:rgb(204,207,210)"></i>
<i style="left:94.82px;top:332.06px;width:6.02px;height:6.04px;background:rgb(214,217,220)"></i>
<i style="left:100.74px;top:332.06px;width:6.02px;height:6.04px;background:rgb(209,212,215)"></i>
<i style="left:106.66px;top:332.06px;width:6.02px;height:6.04px;background:rgb(215,218,221)"></i>
<i style="left:112.58px;top:332.06px;width:6.02px;height:6.04px;background:rgb(214,217,220)"></i>
<i style="left:118.50px;top:332.06px;width:6.02px;height:6.04px;background:rgb(226,229,232)"></i>
<i style="left:124.42px;top:332.06px;width:6.02px;height:6.04px;background:rgb(222,225,228)"></i>
<i style="left:130.34px;top:332.06px;width:6.02px;height:6.04px;background:rgb(218,221,224)"></i>
<i style="left:136.26px;top:332.06px;width:6.02px;height:6.04px;background:rgb(232,235,238)"></i>
<i style="left:142.18px;top:332.06px;width:6.02px;height:6.04px;background:rgb(210,213,216)"></i>
<i style="left:148.10px;top:332.06px;width:6.02px;height:6.04px;background:rgb(214,217,220)"></i>
<i style="left:154.02px;top:332.06px;width:6.02px;height:6.04px;background:rgb(208,211,214)"></i>
<i style="left:159.94px;top:332.06px;width:6.02px;height:6.04px;background:rgb(209,212,215)"></i>
<i style="left:165.86px;top:332.06px;width:6.02px;height:6.04px;background:rgb(215,218,221)"></i>
<i style="left:171.78px;top:332.06px;width:6.02px;height:6.04px;background:rgb(209,212,215)"></i>
<i style="left:177.70px;top:332.06px;width:6.02px;height:6.04px;background:rgb(207,210,213)"></i>
<i style="left:183.62px;top:332.06px;width:6.02px;height:6.04px;background:rgb(198,201,204)"></i>
<i style="left:189.54px;top:332.06px;width:6.02px;height:6.04px;background:rgb(205,208,211)"></i>
<i style="left:195.46px;top:332.06px;width:6.02px;height:6.04px;background:rgb(204,207,210)"></i>
<i style="left:201.38px;top:332.06px;width:6.02px;height:6.04px;background:rgb(240,243,246)"></i>
<i style="left:213.10px;top:332.06px;width:6.07px;height:6.04px;background:rgb(216,219,222)"></i>
<i style="left:219.07px;top:332.06px;width:6.07px;height:6.04px;background:rgb(206,209,212)"></i>
<i style="left:225.04px;top:332.06px;width:6.07px;height:6.04px;background:rgb(214,217,220)"></i>
<i style="left:231.01px;top:332.06px;width:6.07px;height:6.04px;background:rgb(206,209,212)"></i>
<i style="left:236.98px;top:332.06px;width:6.07px;height:6.04px;background:rgb(235,238,241)"></i>
<i style="left:242.95px;top:332.06px;width:6.07px;height:6.04px;background:rgb(215,218,221)"></i>
<i style="left:248.92px;top:332.06px;width:6.07px;height:6.04px;background:rgb(215,218,221)"></i>
<i style="left:254.89px;top:332.06px;width:6.07px;height:6.04px;background:rgb(225,228,231)"></i>
<i style="left:260.86px;top:332.06px;width:6.07px;height:6.04px;background:rgb(209,212,215)"></i>
<i style="left:266.83px;top:332.06px;width:6.07px;height:6.04px;background:rgb(206,209,212)"></i>
<i style="left:272.80px;top:332.06px;width:6.07px;height:6.04px;background:rgb(203,206,209)"></i>
<i style="left:278.77px;top:332.06px;width:6.07px;height:6.04px;background:rgb(215,218,221)"></i>
<i style="left:284.74px;top:332.06px;width:6.07px;height:6.04px;background:rgb(215,218,221)"></i>
<i style="left:59.30px;top:349.88px;width:6.02px;height:6.04px;background:rgb(243,246,249)"></i>
<i style="left:65.22px;top:349.88px;width:6.02px;height:6.04px;background:rgb(226,229,232)"></i>
<i style="left:71.14px;top:349.88px;width:6.02px;height:6.04px;background:rgb(233,236,239)"></i>
<i style="left:77.06px;top:349.88px;width:6.02px;height:6.04px;background:rgb(225,228,231)"></i>
<i style="left:82.98px;top:349.88px;width:6.02px;height:6.04px;background:rgb(229,232,235)"></i>
<i style="left:88.90px;top:349.88px;width:6.02px;height:6.04px;background:rgb(227,230,233)"></i>
<i style="left:94.82px;top:349.88px;width:6.02px;height:6.04px;background:rgb(234,237,240)"></i>
<i style="left:100.74px;top:349.88px;width:6.02px;height:6.04px;background:rgb(232,235,238)"></i>
<i style="left:106.66px;top:349.88px;width:6.02px;height:6.04px;background:rgb(235,238,241)"></i>
<i style="left:112.58px;top:349.88px;width:6.02px;height:6.04px;background:rgb(238,241,244)"></i>
<i style="left:118.50px;top:349.88px;width:6.02px;height:6.04px;background:rgb(240,243,246)"></i>
<i style="left:124.42px;top:349.88px;width:6.02px;height:6.04px;background:rgb(238,241,244)"></i>
<i style="left:130.34px;top:349.88px;width:6.02px;height:6.04px;background:rgb(237,240,243)"></i>
<i style="left:136.26px;top:349.88px;width:6.02px;height:6.04px;background:rgb(242,245,248)"></i>
<i style="left:142.18px;top:349.88px;width:6.02px;height:6.04px;background:rgb(230,233,236)"></i>
<i style="left:148.10px;top:349.88px;width:6.02px;height:6.04px;background:rgb(232,235,238)"></i>
<i style="left:154.02px;top:349.88px;width:6.02px;height:6.04px;background:rgb(231,234,237)"></i>
<i style="left:159.94px;top:349.88px;width:6.02px;height:6.04px;background:rgb(231,234,237)"></i>
<i style="left:165.86px;top:349.88px;width:6.02px;height:6.04px;background:rgb(236,239,242)"></i>
<i style="left:171.78px;top:349.88px;width:6.02px;height:6.04px;background:rgb(236,239,242)"></i>
<i style="left:177.70px;top:349.88px;width:6.02px;height:6.04px;background:rgb(232,235,238)"></i>
<i style="left:183.62px;top:349.88px;width:6.02px;height:6.04px;background:rgb(228,231,234)"></i>
<i style="left:189.54px;top:349.88px;width:6.02px;height:6.04px;background:rgb(233,236,239)"></i>
<i style="left:195.46px;top:349.88px;width:6.02px;height:6.04px;background:rgb(233,236,239)"></i>
<i style="left:201.38px;top:349.88px;width:6.02px;height:6.04px;background:rgb(246,249,252)"></i>
<i style="left:213.10px;top:349.88px;width:6.07px;height:6.04px;background:rgb(237,240,243)"></i>
<i style="left:219.07px;top:349.88px;width:6.07px;height:6.04px;background:rgb(233,236,239)"></i>
<i style="left:225.04px;top:349.88px;width:6.07px;height:6.04px;background:rgb(235,238,241)"></i>
<i style="left:231.01px;top:349.88px;width:6.07px;height:6.04px;background:rgb(236,239,242)"></i>
<i style="left:236.98px;top:349.88px;width:6.07px;height:6.04px;background:rgb(245,248,251)"></i>
<i style="left:242.95px;top:349.88px;width:6.07px;height:6.04px;background:rgb(232,235,238)"></i>
<i style="left:248.92px;top:349.88px;width:6.07px;height:6.04px;background:rgb(238,241,244)"></i>
<i style="left:254.89px;top:349.88px;width:6.07px;height:6.04px;background:rgb(241,244,247)"></i>
<i style="left:260.86px;top:349.88px;width:6.07px;height:6.04px;background:rgb(231,234,237)"></i>
<i style="left:266.83px;top:349.88px;width:6.07px;height:6.04px;background:rgb(233,236,239)"></i>
<i style="left:272.80px;top:349.88px;width:6.07px;height:6.04px;background:rgb(233,236,239)"></i>
<i style="left:278.77px;top:349.88px;width:6.07px;height:6.04px;background:rgb(234,237,240)"></i>
<i style="left:284.74px;top:349.88px;width:6.07px;height:6.04px;background:rgb(235,238,241)"></i>
<i style="left:59.30px;top:355.82px;width:6.02px;height:6.04px;background:rgb(207,210,213)"></i>
<i style="left:65.22px;top:355.82px;width:6.02px;height:6.04px;background:rgb(142,145,148)"></i>
<i style="left:71.14px;top:355.82px;width:6.02px;height:6.04px;background:rgb(171,174,177)"></i>
<i style="left:77.06px;top:355.82px;width:6.02px;height:6.04px;background:rgb(159,162,165)"></i>
<i style="left:82.98px;top:355.82px;width:6.02px;height:6.04px;background:rgb(162,165,168)"></i>
<i style="left:88.90px;top:355.82px;width:6.02px;height:6.04px;background:rgb(162,165,168)"></i>
<i style="left:94.82px;top:355.82px;width:6.02px;height:6.04px;background:rgb(172,175,178)"></i>
<i style="left:100.74px;top:355.82px;width:6.02px;height:6.04px;background:rgb(173,176,179)"></i>
<i style="left:106.66px;top:355.82px;width:6.02px;height:6.04px;background:rgb(171,174,177)"></i>
<i style="left:112.58px;top:355.82px;width:6.02px;height:6.04px;background:rgb(189,192,195)"></i>
<i style="left:118.50px;top:355.82px;width:6.02px;height:6.04px;background:rgb(200,203,206)"></i>
<i style="left:124.42px;top:355.82px;width:6.02px;height:6.04px;background:rgb(194,197,200)"></i>
<i style="left:130.34px;top:355.82px;width:6.02px;height:6.04px;background:rgb(173,176,179)"></i>
<i style="left:136.26px;top:355.82px;width:6.02px;height:6.04px;background:rgb(210,213,216)"></i>
<i style="left:142.18px;top:355.82px;width:6.02px;height:6.04px;background:rgb(153,156,159)"></i>
<i style="left:148.10px;top:355.82px;width:6.02px;height:6.04px;background:rgb(171,174,177)"></i>
<i style="left:154.02px;top:355.82px;width:6.02px;height:6.04px;background:rgb(162,165,168)"></i>
<i style="left:159.94px;top:355.82px;width:6.02px;height:6.04px;background:rgb(163,166,169)"></i>
<i style="left:165.86px;top:355.82px;width:6.02px;height:6.04px;background:rgb(183,186,189)"></i>
<i style="left:171.78px;top:355.82px;width:6.02px;height:6.04px;background:rgb(179,182,185)"></i>
<i style="left:177.70px;top:355.82px;width:6.02px;height:6.04px;background:rgb(161,164,167)"></i>
<i style="left:183.62px;top:355.82px;width:6.02px;height:6.04px;background:rgb(162,165,168)"></i>
<i style="left:189.54px;top:355.82px;width:6.02px;height:6.04px;background:rgb(155,158,161)"></i>
<i style="left:195.46px;top:355.82px;width:6.02px;height:6.04px;background:rgb(157,160,163)"></i>
<i style="left:201.38px;top:355.82px;width:6.02px;height:6.04px;background:rgb(231,234,237)"></i>
<i style="left:213.10px;top:355.82px;width:6.07px;height:6.04px;background:rgb(178,181,184)"></i>
<i style="left:219.07px;top:355.82px;width:6.07px;height:6.04px;background:rgb(166,169,172)"></i>
<i style="left:225.04px;top:355.82px;width:6.07px;height:6.04px;background:rgb(157,160,163)"></i>
<i style="left:231.01px;top:355.82px;width:6.07px;height:6.04px;background:rgb(170,173,176)"></i>
<i style="left:236.98px;top:355.82px;width:6.07px;height:6.04px;background:rgb(222,225,228)"></i>
<i style="left:242.95px;top:355.82px;width:6.07px;height:6.04px;background:rgb(177,180,183)"></i>
<i style="left:248.92px;top:355.82px;width:6.07px;height:6.04px;background:rgb(177,180,183)"></i>
<i style="left:254.89px;top:355.82px;width:6.07px;height:6.04px;background:rgb(209,212,215)"></i>
<i style="left:260.86px;top:355.82px;width:6.07px;height:6.04px;background:rgb(169,172,175)"></i>
<i style="left:266.83px;top:355.82px;width:6.07px;height:6.04px;background:rgb(177,180,183)"></i>
<i style="left:272.80px;top:355.82px;width:6.07px;height:6.04px;background:rgb(163,166,169)"></i>
<i style="left:278.77px;top:355.82px;width:6.07px;height:6.04px;background:rgb(160,163,166)"></i>
<i style="left:284.74px;top:355.82px;width:6.07px;height:6.04px;background:rgb(189,192,195)"></i>
<i style="left:59.30px;top:361.76px;width:6.02px;height:6.04px;background:rgb(252,255,258)"></i>
<i style="left:65.22px;top:361.76px;width:6.02px;height:6.04px;background:rgb(252,255,258)"></i>
<i style="left:71.14px;top:361.76px;width:6.02px;height:6.04px;background:rgb(252,255,258)"></i>
<i style="left:77.06px;top:361.76px;width:6.02px;height:6.04px;background:rgb(252,255,258)"></i>
<i style="left:82.98px;top:361.76px;width:6.02px;height:6.04px;background:rgb(252,255,258)"></i>
<i style="left:88.90px;top:361.76px;width:6.02px;height:6.04px;background:rgb(252,255,258)"></i>
<i style="left:94.82px;top:361.76px;width:6.02px;height:6.04px;background:rgb(252,255,258)"></i>
<i style="left:100.74px;top:361.76px;width:6.02px;height:6.04px;background:rgb(252,255,258)"></i>
<i style="left:106.66px;top:361.76px;width:6.02px;height:6.04px;background:rgb(252,255,258)"></i>
<i style="left:112.58px;top:361.76px;width:6.02px;height:6.04px;background:rgb(252,255,258)"></i>
<i style="left:118.50px;top:361.76px;width:6.02px;height:6.04px;background:rgb(252,255,258)"></i>
<i style="left:124.42px;top:361.76px;width:6.02px;height:6.04px;background:rgb(252,255,258)"></i>
<i style="left:130.34px;top:361.76px;width:6.02px;height:6.04px;background:rgb(252,255,258)"></i>
<i style="left:136.26px;top:361.76px;width:6.02px;height:6.04px;background:rgb(252,255,258)"></i>
<i style="left:142.18px;top:361.76px;width:6.02px;height:6.04px;background:rgb(252,255,258)"></i>
<i style="left:148.10px;top:361.76px;width:6.02px;height:6.04px;background:rgb(252,255,258)"></i>
<i style="left:154.02px;top:361.76px;width:6.02px;height:6.04px;background:rgb(252,255,258)"></i>
<i style="left:159.94px;top:361.76px;width:6.02px;height:6.04px;background:rgb(252,255,258)"></i>
<i style="left:165.86px;top:361.76px;width:6.02px;height:6.04px;background:rgb(252,255,258)"></i>
<i style="left:171.78px;top:361.76px;width:6.02px;height:6.04px;background:rgb(252,255,258)"></i>
<i style="left:177.70px;top:361.76px;width:6.02px;height:6.04px;background:rgb(252,255,258)"></i>
<i style="left:183.62px;top:361.76px;width:6.02px;height:6.04px;background:rgb(252,255,258)"></i>
<i style="left:189.54px;top:361.76px;width:6.02px;height:6.04px;background:rgb(252,255,258)"></i>
<i style="left:195.46px;top:361.76px;width:6.02px;height:6.04px;background:rgb(252,255,258)"></i>
<i style="left:201.38px;top:361.76px;width:6.02px;height:6.04px;background:rgb(252,255,258)"></i>
<i style="left:213.10px;top:361.76px;width:6.07px;height:6.04px;background:rgb(252,255,258)"></i>
<i style="left:219.07px;top:361.76px;width:6.07px;height:6.04px;background:rgb(252,255,258)"></i>
<i style="left:225.04px;top:361.76px;width:6.07px;height:6.04px;background:rgb(252,255,258)"></i>
<i style="left:231.01px;top:361.76px;width:6.07px;height:6.04px;background:rgb(252,255,258)"></i>
<i style="left:236.98px;top:361.76px;width:6.07px;height:6.04px;background:rgb(252,255,258)"></i>
<i style="left:242.95px;top:361.76px;width:6.07px;height:6.04px;background:rgb(252,255,258)"></i>
<i style="left:248.92px;top:361.76px;width:6.07px;height:6.04px;background:rgb(252,255,258)"></i>
<i style="left:254.89px;top:361.76px;width:6.07px;height:6.04px;background:rgb(252,255,258)"></i>
<i style="left:260.86px;top:361.76px;width:6.07px;height:6.04px;background:rgb(252,255,258)"></i>
<i style="left:266.83px;top:361.76px;width:6.07px;height:6.04px;background:rgb(252,255,258)"></i>
<i style="left:272.80px;top:361.76px;width:6.07px;height:6.04px;background:rgb(252,255,258)"></i>
<i style="left:278.77px;top:361.76px;width:6.07px;height:6.04px;background:rgb(252,255,258)"></i>
<i style="left:284.74px;top:361.76px;width:6.07px;height:6.04px;background:rgb(252,255,258)"></i>
<i style="left:59.30px;top:373.64px;width:6.02px;height:6.04px;background:rgb(252,255,258)"></i>
<i style="left:65.22px;top:373.64px;width:6.02px;height:6.04px;background:rgb(252,255,258)"></i>
<i style="left:71.14px;top:373.64px;width:6.02px;height:6.04px;background:rgb(252,255,258)"></i>
<i style="left:77.06px;top:373.64px;width:6.02px;height:6.04px;background:rgb(252,255,258)"></i>
<i style="left:82.98px;top:373.64px;width:6.02px;height:6.04px;background:rgb(252,255,258)"></i>
<i style="left:88.90px;top:373.64px;width:6.02px;height:6.04px;background:rgb(252,255,258)"></i>
<i style="left:94.82px;top:373.64px;width:6.02px;height:6.04px;background:rgb(252,255,258)"></i>
<i style="left:100.74px;top:373.64px;width:6.02px;height:6.04px;background:rgb(252,255,258)"></i>
<i style="left:106.66px;top:373.64px;width:6.02px;height:6.04px;background:rgb(252,255,258)"></i>
<i style="left:112.58px;top:373.64px;width:6.02px;height:6.04px;background:rgb(252,255,258)"></i>
<i style="left:118.50px;top:373.64px;width:6.02px;height:6.04px;background:rgb(252,255,258)"></i>
<i style="left:124.42px;top:373.64px;width:6.02px;height:6.04px;background:rgb(252,255,258)"></i>
<i style="left:130.34px;top:373.64px;width:6.02px;height:6.04px;background:rgb(252,255,258)"></i>
<i style="left:136.26px;top:373.64px;width:6.02px;height:6.04px;background:rgb(252,255,258)"></i>
<i style="left:142.18px;top:373.64px;width:6.02px;height:6.04px;background:rgb(252,255,258)"></i>
<i style="left:148.10px;top:373.64px;width:6.02px;height:6.04px;background:rgb(252,255,258)"></i>
<i style="left:154.02px;top:373.64px;width:6.02px;height:6.04px;background:rgb(252,255,258)"></i>
<i style="left:159.94px;top:373.64px;width:6.02px;height:6.04px;background:rgb(252,255,258)"></i>
<i style="left:165.86px;top:373.64px;width:6.02px;height:6.04px;background:rgb(252,255,258)"></i>
<i style="left:171.78px;top:373.64px;width:6.02px;height:6.04px;background:rgb(252,255,258)"></i>
<i style="left:177.70px;top:373.64px;width:6.02px;height:6.04px;background:rgb(252,255,258)"></i>
<i style="left:183.62px;top:373.64px;width:6.02px;height:6.04px;background:rgb(252,255,258)"></i>
<i style="left:189.54px;top:373.64px;width:6.02px;height:6.04px;background:rgb(252,255,258)"></i>
<i style="left:195.46px;top:373.64px;width:6.02px;height:6.04px;background:rgb(252,255,258)"></i>
<i style="left:201.38px;top:373.64px;width:6.02px;height:6.04px;background:rgb(252,255,258)"></i>
<i style="left:213.10px;top:373.64px;width:6.07px;height:6.04px;background:rgb(252,255,258)"></i>
<i style="left:219.07px;top:373.64px;width:6.07px;height:6.04px;background:rgb(252,255,258)"></i>
<i style="left:225.04px;top:373.64px;width:6.07px;height:6.04px;background:rgb(252,255,258)"></i>
<i style="left:231.01px;top:373.64px;width:6.07px;height:6.04px;background:rgb(252,255,258)"></i>
<i style="left:236.98px;top:373.64px;width:6.07px;height:6.04px;background:rgb(252,255,258)"></i>
<i style="left:242.95px;top:373.64px;width:6.07px;height:6.04px;background:rgb(252,255,258)"></i>
<i style="left:248.92px;top:373.64px;width:6.07px;height:6.04px;background:rgb(252,255,258)"></i>
<i style="left:254.89px;top:373.64px;width:6.07px;height:6.04px;background:rgb(252,255,258)"></i>
<i style="left:260.86px;top:373.64px;width:6.07px;height:6.04px;background:rgb(252,255,258)"></i>
<i style="left:266.83px;top:373.64px;width:6.07px;height:6.04px;background:rgb(252,255,258)"></i>
<i style="left:272.80px;top:373.64px;width:6.07px;height:6.04px;background:rgb(252,255,258)"></i>
<i style="left:278.77px;top:373.64px;width:6.07px;height:6.04px;background:rgb(252,255,258)"></i>
<i style="left:284.74px;top:373.64px;width:6.07px;height:6.04px;background:rgb(252,255,258)"></i>
<i style="left:59.30px;top:379.58px;width:6.02px;height:6.04px;background:rgb(214,217,220)"></i>
<i style="left:65.22px;top:379.58px;width:6.02px;height:6.04px;background:rgb(165,168,171)"></i>
<i style="left:71.14px;top:379.58px;width:6.02px;height:6.04px;background:rgb(187,190,193)"></i>
<i style="left:77.06px;top:379.58px;width:6.02px;height:6.04px;background:rgb(165,168,171)"></i>
<i style="left:82.98px;top:379.58px;width:6.02px;height:6.04px;background:rgb(164,167,170)"></i>
<i style="left:88.90px;top:379.58px;width:6.02px;height:6.04px;background:rgb(173,176,179)"></i>
<i style="left:94.82px;top:379.58px;width:6.02px;height:6.04px;background:rgb(188,191,194)"></i>
<i style="left:100.74px;top:379.58px;width:6.02px;height:6.04px;background:rgb(180,183,186)"></i>
<i style="left:106.66px;top:379.58px;width:6.02px;height:6.04px;background:rgb(177,180,183)"></i>
<i style="left:112.58px;top:379.58px;width:6.02px;height:6.04px;background:rgb(176,179,182)"></i>
<i style="left:118.50px;top:379.58px;width:6.02px;height:6.04px;background:rgb(193,196,199)"></i>
<i style="left:124.42px;top:379.58px;width:6.02px;height:6.04px;background:rgb(196,199,202)"></i>
<i style="left:130.34px;top:379.58px;width:6.02px;height:6.04px;background:rgb(185,188,191)"></i>
<i style="left:136.26px;top:379.58px;width:6.02px;height:6.04px;background:rgb(215,218,221)"></i>
<i style="left:142.18px;top:379.58px;width:6.02px;height:6.04px;background:rgb(169,172,175)"></i>
<i style="left:148.10px;top:379.58px;width:6.02px;height:6.04px;background:rgb(176,179,182)"></i>
<i style="left:154.02px;top:379.58px;width:6.02px;height:6.04px;background:rgb(180,183,186)"></i>
<i style="left:159.94px;top:379.58px;width:6.02px;height:6.04px;background:rgb(175,178,181)"></i>
<i style="left:165.86px;top:379.58px;width:6.02px;height:6.04px;background:rgb(178,181,184)"></i>
<i style="left:171.78px;top:379.58px;width:6.02px;height:6.04px;background:rgb(185,188,191)"></i>
<i style="left:177.70px;top:379.58px;width:6.02px;height:6.04px;background:rgb(177,180,183)"></i>
<i style="left:183.62px;top:379.58px;width:6.02px;height:6.04px;background:rgb(157,160,163)"></i>
<i style="left:189.54px;top:379.58px;width:6.02px;height:6.04px;background:rgb(165,168,171)"></i>
<i style="left:195.46px;top:379.58px;width:6.02px;height:6.04px;background:rgb(181,184,187)"></i>
<i style="left:201.38px;top:379.58px;width:6.02px;height:6.04px;background:rgb(231,234,237)"></i>
<i style="left:213.10px;top:379.58px;width:6.07px;height:6.04px;background:rgb(188,191,194)"></i>
<i style="left:219.07px;top:379.58px;width:6.07px;height:6.04px;background:rgb(182,185,188)"></i>
<i style="left:225.04px;top:379.58px;width:6.07px;height:6.04px;background:rgb(176,179,182)"></i>
<i style="left:231.01px;top:379.58px;width:6.07px;height:6.04px;background:rgb(165,168,171)"></i>
<i style="left:236.98px;top:379.58px;width:6.07px;height:6.04px;background:rgb(219,222,225)"></i>
<i style="left:242.95px;top:379.58px;width:6.07px;height:6.04px;background:rgb(168,171,174)"></i>
<i style="left:248.92px;top:379.58px;width:6.07px;height:6.04px;background:rgb(200,203,206)"></i>
<i style="left:254.89px;top:379.58px;width:6.07px;height:6.04px;background:rgb(214,217,220)"></i>
<i style="left:260.86px;top:379.58px;width:6.07px;height:6.04px;background:rgb(172,175,178)"></i>
<i style="left:266.83px;top:379.58px;width:6.07px;height:6.04px;background:rgb(165,168,171)"></i>
<i style="left:272.80px;top:379.58px;width:6.07px;height:6.04px;background:rgb(171,174,177)"></i>
<i style="left:278.77px;top:379.58px;width:6.07px;height:6.04px;background:rgb(175,178,181)"></i>
<i style="left:284.74px;top:379.58px;width:6.07px;height:6.04px;background:rgb(196,199,202)"></i>
<i style="left:59.30px;top:385.52px;width:6.02px;height:6.04px;background:rgb(239,242,245)"></i>
<i style="left:65.22px;top:385.52px;width:6.02px;height:6.04px;background:rgb(212,215,218)"></i>
<i style="left:71.14px;top:385.52px;width:6.02px;height:6.04px;background:rgb(224,227,230)"></i>
<i style="left:77.06px;top:385.52px;width:6.02px;height:6.04px;background:rgb(212,215,218)"></i>
<i style="left:82.98px;top:385.52px;width:6.02px;height:6.04px;background:rgb(214,217,220)"></i>
<i style="left:88.90px;top:385.52px;width:6.02px;height:6.04px;background:rgb(222,225,228)"></i>
<i style="left:94.82px;top:385.52px;width:6.02px;height:6.04px;background:rgb(230,233,236)"></i>
<i style="left:100.74px;top:385.52px;width:6.02px;height:6.04px;background:rgb(227,230,233)"></i>
<i style="left:106.66px;top:385.52px;width:6.02px;height:6.04px;background:rgb(225,228,231)"></i>
<i style="left:112.58px;top:385.52px;width:6.02px;height:6.04px;background:rgb(226,229,232)"></i>
<i style="left:118.50px;top:385.52px;width:6.02px;height:6.04px;background:rgb(229,232,235)"></i>
<i style="left:124.42px;top:385.52px;width:6.02px;height:6.04px;background:rgb(230,233,236)"></i>
<i style="left:130.34px;top:385.52px;width:6.02px;height:6.04px;background:rgb(226,229,232)"></i>
<i style="left:136.26px;top:385.52px;width:6.02px;height:6.04px;background:rgb(238,241,244)"></i>
<i style="left:142.18px;top:385.52px;width:6.02px;height:6.04px;background:rgb(221,224,227)"></i>
<i style="left:148.10px;top:385.52px;width:6.02px;height:6.04px;background:rgb(223,226,229)"></i>
<i style="left:154.02px;top:385.52px;width:6.02px;height:6.04px;background:rgb(226,229,232)"></i>
<i style="left:159.94px;top:385.52px;width:6.02px;height:6.04px;background:rgb(219,222,225)"></i>
<i style="left:165.86px;top:385.52px;width:6.02px;height:6.04px;background:rgb(230,233,236)"></i>
<i style="left:171.78px;top:385.52px;width:6.02px;height:6.04px;background:rgb(221,224,227)"></i>
<i style="left:177.70px;top:385.52px;width:6.02px;height:6.04px;background:rgb(224,227,230)"></i>
<i style="left:183.62px;top:385.52px;width:6.02px;height:6.04px;background:rgb(221,224,227)"></i>
<i style="left:189.54px;top:385.52px;width:6.02px;height:6.04px;background:rgb(227,230,233)"></i>
<i style="left:195.46px;top:385.52px;width:6.02px;height:6.04px;background:rgb(226,229,232)"></i>
<i style="left:201.38px;top:385.52px;width:6.02px;height:6.04px;background:rgb(243,246,249)"></i>
<i style="left:213.10px;top:385.52px;width:6.07px;height:6.04px;background:rgb(226,229,232)"></i>
<i style="left:219.07px;top:385.52px;width:6.07px;height:6.04px;background:rgb(229,232,235)"></i>
<i style="left:225.04px;top:385.52px;width:6.07px;height:6.04px;background:rgb(228,231,234)"></i>
<i style="left:231.01px;top:385.52px;width:6.07px;height:6.04px;background:rgb(224,227,230)"></i>
<i style="left:236.98px;top:385.52px;width:6.07px;height:6.04px;background:rgb(241,244,247)"></i>
<i style="left:242.95px;top:385.52px;width:6.07px;height:6.04px;background:rgb(225,228,231)"></i>
<i style="left:248.92px;top:385.52px;width:6.07px;height:6.04px;background:rgb(232,235,238)"></i>
<i style="left:254.89px;top:385.52px;width:6.07px;height:6.04px;background:rgb(236,239,242)"></i>
<i style="left:260.86px;top:385.52px;width:6.07px;height:6.04px;background:rgb(229,232,235)"></i>
<i style="left:266.83px;top:385.52px;width:6.07px;height:6.04px;background:rgb(226,229,232)"></i>
<i style="left:272.80px;top:385.52px;width:6.07px;height:6.04px;background:rgb(223,226,229)"></i>
<i style="left:278.77px;top:385.52px;width:6.07px;height:6.04px;background:rgb(221,224,227)"></i>
<i style="left:284.74px;top:385.52px;width:6.07px;height:6.04px;background:rgb(227,230,233)"></i>
<i style="left:59.30px;top:403.34px;width:6.02px;height:6.04px;background:rgb(234,237,240)"></i>
<i style="left:65.22px;top:403.34px;width:6.02px;height:6.04px;background:rgb(211,214,217)"></i>
<i style="left:71.14px;top:403.34px;width:6.02px;height:6.04px;background:rgb(224,227,230)"></i>
<i style="left:77.06px;top:403.34px;width:6.02px;height:6.04px;background:rgb(213,216,219)"></i>
<i style="left:82.98px;top:403.34px;width:6.02px;height:6.04px;background:rgb(207,210,213)"></i>
<i style="left:88.90px;top:403.34px;width:6.02px;height:6.04px;background:rgb(212,215,218)"></i>
<i style="left:94.82px;top:403.34px;width:6.02px;height:6.04px;background:rgb(225,228,231)"></i>
<i style="left:100.74px;top:403.34px;width:6.02px;height:6.04px;background:rgb(224,227,230)"></i>
<i style="left:106.66px;top:403.34px;width:6.02px;height:6.04px;background:rgb(221,224,227)"></i>
<i style="left:112.58px;top:403.34px;width:6.02px;height:6.04px;background:rgb(222,225,228)"></i>
<i style="left:118.50px;top:403.34px;width:6.02px;height:6.04px;background:rgb(229,232,235)"></i>
<i style="left:124.42px;top:403.34px;width:6.02px;height:6.04px;background:rgb(229,232,235)"></i>
<i style="left:130.34px;top:403.34px;width:6.02px;height:6.04px;background:rgb(221,224,227)"></i>
<i style="left:136.26px;top:403.34px;width:6.02px;height:6.04px;background:rgb(235,238,241)"></i>
<i style="left:142.18px;top:403.34px;width:6.02px;height:6.04px;background:rgb(218,221,224)"></i>
<i style="left:148.10px;top:403.34px;width:6.02px;height:6.04px;background:rgb(223,226,229)"></i>
<i style="left:154.02px;top:403.34px;width:6.02px;height:6.04px;background:rgb(219,222,225)"></i>
<i style="left:159.94px;top:403.34px;width:6.02px;height:6.04px;background:rgb(218,221,224)"></i>
<i style="left:165.86px;top:403.34px;width:6.02px;height:6.04px;background:rgb(223,226,229)"></i>
<i style="left:171.78px;top:403.34px;width:6.02px;height:6.04px;background:rgb(223,226,229)"></i>
<i style="left:177.70px;top:403.34px;width:6.02px;height:6.04px;background:rgb(217,220,223)"></i>
<i style="left:183.62px;top:403.34px;width:6.02px;height:6.04px;background:rgb(210,213,216)"></i>
<i style="left:189.54px;top:403.34px;width:6.02px;height:6.04px;background:rgb(219,222,225)"></i>
<i style="left:195.46px;top:403.34px;width:6.02px;height:6.04px;background:rgb(222,225,228)"></i>
<i style="left:201.38px;top:403.34px;width:6.02px;height:6.04px;background:rgb(241,244,247)"></i>
<i style="left:213.10px;top:403.34px;width:6.07px;height:6.04px;background:rgb(225,228,231)"></i>
<i style="left:219.07px;top:403.34px;width:6.07px;height:6.04px;background:rgb(218,221,224)"></i>
<i style="left:225.04px;top:403.34px;width:6.07px;height:6.04px;background:rgb(222,225,228)"></i>
<i style="left:231.01px;top:403.34px;width:6.07px;height:6.04px;background:rgb(222,225,228)"></i>
<i style="left:236.98px;top:403.34px;width:6.07px;height:6.04px;background:rgb(238,241,244)"></i>
<i style="left:242.95px;top:403.34px;width:6.07px;height:6.04px;background:rgb(222,225,228)"></i>
<i style="left:248.92px;top:403.34px;width:6.07px;height:6.04px;background:rgb(223,226,229)"></i>
<i style="left:254.89px;top:403.34px;width:6.07px;height:6.04px;background:rgb(234,237,240)"></i>
<i style="left:260.86px;top:403.34px;width:6.07px;height:6.04px;background:rgb(223,226,229)"></i>
<i style="left:266.83px;top:403.34px;width:6.07px;height:6.04px;background:rgb(222,225,228)"></i>
<i style="left:272.80px;top:403.34px;width:6.07px;height:6.04px;background:rgb(219,222,225)"></i>
<i style="left:278.77px;top:403.34px;width:6.07px;height:6.04px;background:rgb(219,222,225)"></i>
<i style="left:284.74px;top:403.34px;width:6.07px;height:6.04px;background:rgb(221,224,227)"></i>
<i style="left:59.30px;top:409.28px;width:6.02px;height:6.04px;background:rgb(219,222,225)"></i>
<i style="left:65.22px;top:409.28px;width:6.02px;height:6.04px;background:rgb(162,165,168)"></i>
<i style="left:71.14px;top:409.28px;width:6.02px;height:6.04px;background:rgb(190,193,196)"></i>
<i style="left:77.06px;top:409.28px;width:6.02px;height:6.04px;background:rgb(145,148,151)"></i>
<i style="left:82.98px;top:409.28px;width:6.02px;height:6.04px;background:rgb(173,176,179)"></i>
<i style="left:88.90px;top:409.28px;width:6.02px;height:6.04px;background:rgb(178,181,184)"></i>
<i style="left:94.82px;top:409.28px;width:6.02px;height:6.04px;background:rgb(195,198,201)"></i>
<i style="left:100.74px;top:409.28px;width:6.02px;height:6.04px;background:rgb(180,183,186)"></i>
<i style="left:106.66px;top:409.28px;width:6.02px;height:6.04px;background:rgb(174,177,180)"></i>
<i style="left:112.58px;top:409.28px;width:6.02px;height:6.04px;background:rgb(180,183,186)"></i>
<i style="left:118.50px;top:409.28px;width:6.02px;height:6.04px;background:rgb(196,199,202)"></i>
<i style="left:124.42px;top:409.28px;width:6.02px;height:6.04px;background:rgb(189,192,195)"></i>
<i style="left:130.34px;top:409.28px;width:6.02px;height:6.04px;background:rgb(178,181,184)"></i>
<i style="left:136.26px;top:409.28px;width:6.02px;height:6.04px;background:rgb(219,222,225)"></i>
<i style="left:142.18px;top:409.28px;width:6.02px;height:6.04px;background:rgb(178,181,184)"></i>
<i style="left:148.10px;top:409.28px;width:6.02px;height:6.04px;background:rgb(167,170,173)"></i>
<i style="left:154.02px;top:409.28px;width:6.02px;height:6.04px;background:rgb(167,170,173)"></i>
<i style="left:159.94px;top:409.28px;width:6.02px;height:6.04px;background:rgb(184,187,190)"></i>
<i style="left:165.86px;top:409.28px;width:6.02px;height:6.04px;background:rgb(188,191,194)"></i>
<i style="left:171.78px;top:409.28px;width:6.02px;height:6.04px;background:rgb(182,185,188)"></i>
<i style="left:177.70px;top:409.28px;width:6.02px;height:6.04px;background:rgb(183,186,189)"></i>
<i style="left:183.62px;top:409.28px;width:6.02px;height:6.04px;background:rgb(169,172,175)"></i>
<i style="left:189.54px;top:409.28px;width:6.02px;height:6.04px;background:rgb(185,188,191)"></i>
<i style="left:195.46px;top:409.28px;width:6.02px;height:6.04px;background:rgb(189,192,195)"></i>
<i style="left:201.38px;top:409.28px;width:6.02px;height:6.04px;background:rgb(232,235,238)"></i>
<i style="left:213.10px;top:409.28px;width:6.07px;height:6.04px;background:rgb(189,192,195)"></i>
<i style="left:219.07px;top:409.28px;width:6.07px;height:6.04px;background:rgb(174,177,180)"></i>
<i style="left:225.04px;top:409.28px;width:6.07px;height:6.04px;background:rgb(187,190,193)"></i>
<i style="left:231.01px;top:409.28px;width:6.07px;height:6.04px;background:rgb(169,172,175)"></i>
<i style="left:236.98px;top:409.28px;width:6.07px;height:6.04px;background:rgb(226,229,232)"></i>
<i style="left:242.95px;top:409.28px;width:6.07px;height:6.04px;background:rgb(183,186,189)"></i>
<i style="left:248.92px;top:409.28px;width:6.07px;height:6.04px;background:rgb(188,191,194)"></i>
<i style="left:254.89px;top:409.28px;width:6.07px;height:6.04px;background:rgb(206,209,212)"></i>
<i style="left:260.86px;top:409.28px;width:6.07px;height:6.04px;background:rgb(182,185,188)"></i>
<i style="left:266.83px;top:409.28px;width:6.07px;height:6.04px;background:rgb(188,191,194)"></i>
<i style="left:272.80px;top:409.28px;width:6.07px;height:6.04px;background:rgb(175,178,181)"></i>
<i style="left:278.77px;top:409.28px;width:6.07px;height:6.04px;background:rgb(183,186,189)"></i>
<i style="left:284.74px;top:409.28px;width:6.07px;height:6.04px;background:rgb(182,185,188)"></i>
<i style="left:59.30px;top:427.10px;width:6.02px;height:6.04px;background:rgb(252,255,258)"></i>
<i style="left:65.22px;top:427.10px;width:6.02px;height:6.04px;background:rgb(251,254,257)"></i>
<i style="left:71.14px;top:427.10px;width:6.02px;height:6.04px;background:rgb(251,254,257)"></i>
<i style="left:77.06px;top:427.10px;width:6.02px;height:6.04px;background:rgb(251,254,257)"></i>
<i style="left:82.98px;top:427.10px;width:6.02px;height:6.04px;background:rgb(251,254,257)"></i>
<i style="left:88.90px;top:427.10px;width:6.02px;height:6.04px;background:rgb(251,254,257)"></i>
<i style="left:94.82px;top:427.10px;width:6.02px;height:6.04px;background:rgb(251,254,257)"></i>
<i style="left:100.74px;top:427.10px;width:6.02px;height:6.04px;background:rgb(251,254,257)"></i>
<i style="left:106.66px;top:427.10px;width:6.02px;height:6.04px;background:rgb(252,255,258)"></i>
<i style="left:112.58px;top:427.10px;width:6.02px;height:6.04px;background:rgb(252,255,258)"></i>
<i style="left:118.50px;top:427.10px;width:6.02px;height:6.04px;background:rgb(252,255,258)"></i>
<i style="left:124.42px;top:427.10px;width:6.02px;height:6.04px;background:rgb(252,255,258)"></i>
<i style="left:130.34px;top:427.10px;width:6.02px;height:6.04px;background:rgb(251,254,257)"></i>
<i style="left:136.26px;top:427.10px;width:6.02px;height:6.04px;background:rgb(252,255,258)"></i>
<i style="left:142.18px;top:427.10px;width:6.02px;height:6.04px;background:rgb(251,254,257)"></i>
<i style="left:148.10px;top:427.10px;width:6.02px;height:6.04px;background:rgb(251,254,257)"></i>
<i style="left:154.02px;top:427.10px;width:6.02px;height:6.04px;background:rgb(251,254,257)"></i>
<i style="left:159.94px;top:427.10px;width:6.02px;height:6.04px;background:rgb(251,254,257)"></i>
<i style="left:165.86px;top:427.10px;width:6.02px;height:6.04px;background:rgb(252,255,258)"></i>
<i style="left:171.78px;top:427.10px;width:6.02px;height:6.04px;background:rgb(251,254,257)"></i>
<i style="left:177.70px;top:427.10px;width:6.02px;height:6.04px;background:rgb(251,254,257)"></i>
<i style="left:183.62px;top:427.10px;width:6.02px;height:6.04px;background:rgb(251,254,257)"></i>
<i style="left:189.54px;top:427.10px;width:6.02px;height:6.04px;background:rgb(251,254,257)"></i>
<i style="left:195.46px;top:427.10px;width:6.02px;height:6.04px;background:rgb(251,254,257)"></i>
<i style="left:201.38px;top:427.10px;width:6.02px;height:6.04px;background:rgb(252,255,258)"></i>
<i style="left:213.10px;top:427.10px;width:6.07px;height:6.04px;background:rgb(251,254,257)"></i>
<i style="left:219.07px;top:427.10px;width:6.07px;height:6.04px;background:rgb(251,254,257)"></i>
<i style="left:225.04px;top:427.10px;width:6.07px;height:6.04px;background:rgb(251,254,257)"></i>
<i style="left:231.01px;top:427.10px;width:6.07px;height:6.04px;background:rgb(251,254,257)"></i>
<i style="left:236.98px;top:427.10px;width:6.07px;height:6.04px;background:rgb(252,255,258)"></i>
<i style="left:242.95px;top:427.10px;width:6.07px;height:6.04px;background:rgb(251,254,257)"></i>
<i style="left:248.92px;top:427.10px;width:6.07px;height:6.04px;background:rgb(251,254,257)"></i>
<i style="left:254.89px;top:427.10px;width:6.07px;height:6.04px;background:rgb(252,255,258)"></i>
<i style="left:260.86px;top:427.10px;width:6.07px;height:6.04px;background:rgb(251,254,257)"></i>
<i style="left:266.83px;top:427.10px;width:6.07px;height:6.04px;background:rgb(251,254,257)"></i>
<i style="left:272.80px;top:427.10px;width:6.07px;height:6.04px;background:rgb(251,254,257)"></i>
<i style="left:278.77px;top:427.10px;width:6.07px;height:6.04px;background:rgb(251,254,257)"></i>
<i style="left:284.74px;top:427.10px;width:6.07px;height:6.04px;background:rgb(252,255,258)"></i>
<i style="left:59.30px;top:433.04px;width:6.02px;height:6.04px;background:rgb(205,208,211)"></i>
<i style="left:65.22px;top:433.04px;width:6.02px;height:6.04px;background:rgb(135,138,141)"></i>
<i style="left:71.14px;top:433.04px;width:6.02px;height:6.04px;background:rgb(165,168,171)"></i>
<i style="left:77.06px;top:433.04px;width:6.02px;height:6.04px;background:rgb(133,136,139)"></i>
<i style="left:82.98px;top:433.04px;width:6.02px;height:6.04px;background:rgb(146,149,152)"></i>
<i style="left:88.90px;top:433.04px;width:6.02px;height:6.04px;background:rgb(157,160,163)"></i>
<i style="left:94.82px;top:433.04px;width:6.02px;height:6.04px;background:rgb(179,182,185)"></i>
<i style="left:100.74px;top:433.04px;width:6.02px;height:6.04px;background:rgb(169,172,175)"></i>
<i style="left:106.66px;top:433.04px;width:6.02px;height:6.04px;background:rgb(164,167,170)"></i>
<i style="left:112.58px;top:433.04px;width:6.02px;height:6.04px;background:rgb(186,189,192)"></i>
<i style="left:118.50px;top:433.04px;width:6.02px;height:6.04px;background:rgb(196,199,202)"></i>
<i style="left:124.42px;top:433.04px;width:6.02px;height:6.04px;background:rgb(183,186,189)"></i>
<i style="left:130.34px;top:433.04px;width:6.02px;height:6.04px;background:rgb(181,184,187)"></i>
<i style="left:136.26px;top:433.04px;width:6.02px;height:6.04px;background:rgb(217,220,223)"></i>
<i style="left:142.18px;top:433.04px;width:6.02px;height:6.04px;background:rgb(169,172,175)"></i>
<i style="left:148.10px;top:433.04px;width:6.02px;height:6.04px;background:rgb(162,165,168)"></i>
<i style="left:154.02px;top:433.04px;width:6.02px;height:6.04px;background:rgb(165,168,171)"></i>
<i style="left:159.94px;top:433.04px;width:6.02px;height:6.04px;background:rgb(146,149,152)"></i>
<i style="left:165.86px;top:433.04px;width:6.02px;height:6.04px;background:rgb(172,175,178)"></i>
<i style="left:171.78px;top:433.04px;width:6.02px;height:6.04px;background:rgb(155,158,161)"></i>
<i style="left:177.70px;top:433.04px;width:6.02px;height:6.04px;background:rgb(174,177,180)"></i>
<i style="left:183.62px;top:433.04px;width:6.02px;height:6.04px;background:rgb(163,166,169)"></i>
<i style="left:189.54px;top:433.04px;width:6.02px;height:6.04px;background:rgb(175,178,181)"></i>
<i style="left:195.46px;top:433.04px;width:6.02px;height:6.04px;background:rgb(166,169,172)"></i>
<i style="left:201.38px;top:433.04px;width:6.02px;height:6.04px;background:rgb(225,228,231)"></i>
<i style="left:213.10px;top:433.04px;width:6.07px;height:6.04px;background:rgb(176,179,182)"></i>
<i style="left:219.07px;top:433.04px;width:6.07px;height:6.04px;background:rgb(178,181,184)"></i>
<i style="left:225.04px;top:433.04px;width:6.07px;height:6.04px;background:rgb(169,172,175)"></i>
<i style="left:231.01px;top:433.04px;width:6.07px;height:6.04px;background:rgb(163,166,169)"></i>
<i style="left:236.98px;top:433.04px;width:6.07px;height:6.04px;background:rgb(217,220,223)"></i>
<i style="left:242.95px;top:433.04px;width:6.07px;height:6.04px;background:rgb(161,164,167)"></i>
<i style="left:248.92px;top:433.04px;width:6.07px;height:6.04px;background:rgb(177,180,183)"></i>
<i style="left:254.89px;top:433.04px;width:6.07px;height:6.04px;background:rgb(201,204,207)"></i>
<i style="left:260.86px;top:433.04px;width:6.07px;height:6.04px;background:rgb(178,181,184)"></i>
<i style="left:266.83px;top:433.04px;width:6.07px;height:6.04px;background:rgb(157,160,163)"></i>
<i style="left:272.80px;top:433.04px;width:6.07px;height:6.04px;background:rgb(167,170,173)"></i>
<i style="left:278.77px;top:433.04px;width:6.07px;height:6.04px;background:rgb(167,170,173)"></i>
<i style="left:284.74px;top:433.04px;width:6.07px;height:6.04px;background:rgb(182,185,188)"></i>
<i style="left:59.30px;top:438.98px;width:6.02px;height:6.04px;background:rgb(244,247,250)"></i>
<i style="left:65.22px;top:438.98px;width:6.02px;height:6.04px;background:rgb(235,238,241)"></i>
<i style="left:71.14px;top:438.98px;width:6.02px;height:6.04px;background:rgb(239,242,245)"></i>
<i style="left:77.06px;top:438.98px;width:6.02px;height:6.04px;background:rgb(234,237,240)"></i>
<i style="left:82.98px;top:438.98px;width:6.02px;height:6.04px;background:rgb(236,239,242)"></i>
<i style="left:88.90px;top:438.98px;width:6.02px;height:6.04px;background:rgb(232,235,238)"></i>
<i style="left:94.82px;top:438.98px;width:6.02px;height:6.04px;background:rgb(238,241,244)"></i>
<i style="left:100.74px;top:438.98px;width:6.02px;height:6.04px;background:rgb(238,241,244)"></i>
<i style="left:106.66px;top:438.98px;width:6.02px;height:6.04px;background:rgb(238,241,244)"></i>
<i style="left:112.58px;top:438.98px;width:6.02px;height:6.04px;background:rgb(237,240,243)"></i>
<i style="left:118.50px;top:438.98px;width:6.02px;height:6.04px;background:rgb(241,244,247)"></i>
<i style="left:124.42px;top:438.98px;width:6.02px;height:6.04px;background:rgb(242,245,248)"></i>
<i style="left:130.34px;top:438.98px;width:6.02px;height:6.04px;background:rgb(237,240,243)"></i>
<i style="left:136.26px;top:438.98px;width:6.02px;height:6.04px;background:rgb(244,247,250)"></i>
<i style="left:142.18px;top:438.98px;width:6.02px;height:6.04px;background:rgb(233,236,239)"></i>
<i style="left:148.10px;top:438.98px;width:6.02px;height:6.04px;background:rgb(238,241,244)"></i>
<i style="left:154.02px;top:438.98px;width:6.02px;height:6.04px;background:rgb(236,239,242)"></i>
<i style="left:159.94px;top:438.98px;width:6.02px;height:6.04px;background:rgb(234,237,240)"></i>
<i style="left:165.86px;top:438.98px;width:6.02px;height:6.04px;background:rgb(238,241,244)"></i>
<i style="left:171.78px;top:438.98px;width:6.02px;height:6.04px;background:rgb(235,238,241)"></i>
<i style="left:177.70px;top:438.98px;width:6.02px;height:6.04px;background:rgb(239,242,245)"></i>
<i style="left:183.62px;top:438.98px;width:6.02px;height:6.04px;background:rgb(235,238,241)"></i>
<i style="left:189.54px;top:438.98px;width:6.02px;height:6.04px;background:rgb(238,241,244)"></i>
<i style="left:195.46px;top:438.98px;width:6.02px;height:6.04px;background:rgb(238,241,244)"></i>
<i style="left:201.38px;top:438.98px;width:6.02px;height:6.04px;background:rgb(247,250,253)"></i>
<i style="left:213.10px;top:438.98px;width:6.07px;height:6.04px;background:rgb(238,241,244)"></i>
<i style="left:219.07px;top:438.98px;width:6.07px;height:6.04px;background:rgb(236,239,242)"></i>
<i style="left:225.04px;top:438.98px;width:6.07px;height:6.04px;background:rgb(238,241,244)"></i>
<i style="left:231.01px;top:438.98px;width:6.07px;height:6.04px;background:rgb(235,238,241)"></i>
<i style="left:236.98px;top:438.98px;width:6.07px;height:6.04px;background:rgb(246,249,252)"></i>
<i style="left:242.95px;top:438.98px;width:6.07px;height:6.04px;background:rgb(238,241,244)"></i>
<i style="left:248.92px;top:438.98px;width:6.07px;height:6.04px;background:rgb(239,242,245)"></i>
<i style="left:254.89px;top:438.98px;width:6.07px;height:6.04px;background:rgb(242,245,248)"></i>
<i style="left:260.86px;top:438.98px;width:6.07px;height:6.04px;background:rgb(239,242,245)"></i>
<i style="left:266.83px;top:438.98px;width:6.07px;height:6.04px;background:rgb(236,239,242)"></i>
<i style="left:272.80px;top:438.98px;width:6.07px;height:6.04px;background:rgb(236,239,242)"></i>
<i style="left:278.77px;top:438.98px;width:6.07px;height:6.04px;background:rgb(239,242,245)"></i>
<i style="left:284.74px;top:438.98px;width:6.07px;height:6.04px;background:rgb(240,243,246)"></i>
<i style="left:59.30px;top:456.80px;width:6.02px;height:6.04px;background:rgb(231,234,237)"></i>
<i style="left:65.22px;top:456.80px;width:6.02px;height:6.04px;background:rgb(196,199,202)"></i>
<i style="left:71.14px;top:456.80px;width:6.02px;height:6.04px;background:rgb(211,214,217)"></i>
<i style="left:77.06px;top:456.80px;width:6.02px;height:6.04px;background:rgb(189,192,195)"></i>
<i style="left:82.98px;top:456.80px;width:6.02px;height:6.04px;background:rgb(192,195,198)"></i>
<i style="left:88.90px;top:456.80px;width:6.02px;height:6.04px;background:rgb(201,204,207)"></i>
<i style="left:94.82px;top:456.80px;width:6.02px;height:6.04px;background:rgb(215,218,221)"></i>
<i style="left:100.74px;top:456.80px;width:6.02px;height:6.04px;background:rgb(206,209,212)"></i>
<i style="left:106.66px;top:456.80px;width:6.02px;height:6.04px;background:rgb(204,207,210)"></i>
<i style="left:112.58px;top:456.80px;width:6.02px;height:6.04px;background:rgb(214,217,220)"></i>
<i style="left:118.50px;top:456.80px;width:6.02px;height:6.04px;background:rgb(220,223,226)"></i>
<i style="left:124.42px;top:456.80px;width:6.02px;height:6.04px;background:rgb(219,222,225)"></i>
<i style="left:130.34px;top:456.80px;width:6.02px;height:6.04px;background:rgb(205,208,211)"></i>
<i style="left:136.26px;top:456.80px;width:6.02px;height:6.04px;background:rgb(229,232,235)"></i>
<i style="left:142.18px;top:456.80px;width:6.02px;height:6.04px;background:rgb(205,208,211)"></i>
<i style="left:148.10px;top:456.80px;width:6.02px;height:6.04px;background:rgb(208,211,214)"></i>
<i style="left:154.02px;top:456.80px;width:6.02px;height:6.04px;background:rgb(202,205,208)"></i>
<i style="left:159.94px;top:456.80px;width:6.02px;height:6.04px;background:rgb(200,203,206)"></i>
<i style="left:165.86px;top:456.80px;width:6.02px;height:6.04px;background:rgb(210,213,216)"></i>
<i style="left:171.78px;top:456.80px;width:6.02px;height:6.04px;background:rgb(210,213,216)"></i>
<i style="left:177.70px;top:456.80px;width:6.02px;height:6.04px;background:rgb(210,213,216)"></i>
<i style="left:183.62px;top:456.80px;width:6.02px;height:6.04px;background:rgb(192,195,198)"></i>
<i style="left:189.54px;top:456.80px;width:6.02px;height:6.04px;background:rgb(204,207,210)"></i>
<i style="left:195.46px;top:456.80px;width:6.02px;height:6.04px;background:rgb(207,210,213)"></i>
<i style="left:201.38px;top:456.80px;width:6.02px;height:6.04px;background:rgb(239,242,245)"></i>
<i style="left:213.10px;top:456.80px;width:6.07px;height:6.04px;background:rgb(203,206,209)"></i>
<i style="left:219.07px;top:456.80px;width:6.07px;height:6.04px;background:rgb(209,212,215)"></i>
<i style="left:225.04px;top:456.80px;width:6.07px;height:6.04px;background:rgb(203,206,209)"></i>
<i style="left:231.01px;top:456.80px;width:6.07px;height:6.04px;background:rgb(206,209,212)"></i>
<i style="left:236.98px;top:456.80px;width:6.07px;height:6.04px;background:rgb(234,237,240)"></i>
<i style="left:242.95px;top:456.80px;width:6.07px;height:6.04px;background:rgb(200,203,206)"></i>
<i style="left:248.92px;top:456.80px;width:6.07px;height:6.04px;background:rgb(208,211,214)"></i>
<i style="left:254.89px;top:456.80px;width:6.07px;height:6.04px;background:rgb(226,229,232)"></i>
<i style="left:260.86px;top:456.80px;width:6.07px;height:6.04px;background:rgb(209,212,215)"></i>
<i style="left:266.83px;top:456.80px;width:6.07px;height:6.04px;background:rgb(200,203,206)"></i>
<i style="left:272.80px;top:456.80px;width:6.07px;height:6.04px;background:rgb(206,209,212)"></i>
<i style="left:278.77px;top:456.80px;width:6.07px;height:6.04px;background:rgb(212,215,218)"></i>
<i style="left:284.74px;top:456.80px;width:6.07px;height:6.04px;background:rgb(206,209,212)"></i>
<i style="left:59.30px;top:462.74px;width:6.02px;height:6.04px;background:rgb(223,226,229)"></i>
<i style="left:65.22px;top:462.74px;width:6.02px;height:6.04px;background:rgb(170,173,176)"></i>
<i style="left:71.14px;top:462.74px;width:6.02px;height:6.04px;background:rgb(199,202,205)"></i>
<i style="left:77.06px;top:462.74px;width:6.02px;height:6.04px;background:rgb(168,171,174)"></i>
<i style="left:82.98px;top:462.74px;width:6.02px;height:6.04px;background:rgb(182,185,188)"></i>
<i style="left:88.90px;top:462.74px;width:6.02px;height:6.04px;background:rgb(190,193,196)"></i>
<i style="left:94.82px;top:462.74px;width:6.02px;height:6.04px;background:rgb(207,210,213)"></i>
<i style="left:100.74px;top:462.74px;width:6.02px;height:6.04px;background:rgb(191,194,197)"></i>
<i style="left:106.66px;top:462.74px;width:6.02px;height:6.04px;background:rgb(193,196,199)"></i>
<i style="left:112.58px;top:462.74px;width:6.02px;height:6.04px;background:rgb(193,196,199)"></i>
<i style="left:118.50px;top:462.74px;width:6.02px;height:6.04px;background:rgb(215,218,221)"></i>
<i style="left:124.42px;top:462.74px;width:6.02px;height:6.04px;background:rgb(206,209,212)"></i>
<i style="left:130.34px;top:462.74px;width:6.02px;height:6.04px;background:rgb(201,204,207)"></i>
<i style="left:136.26px;top:462.74px;width:6.02px;height:6.04px;background:rgb(224,227,230)"></i>
<i style="left:142.18px;top:462.74px;width:6.02px;height:6.04px;background:rgb(193,196,199)"></i>
<i style="left:148.10px;top:462.74px;width:6.02px;height:6.04px;background:rgb(195,198,201)"></i>
<i style="left:154.02px;top:462.74px;width:6.02px;height:6.04px;background:rgb(188,191,194)"></i>
<i style="left:159.94px;top:462.74px;width:6.02px;height:6.04px;background:rgb(180,183,186)"></i>
<i style="left:165.86px;top:462.74px;width:6.02px;height:6.04px;background:rgb(208,211,214)"></i>
<i style="left:171.78px;top:462.74px;width:6.02px;height:6.04px;background:rgb(194,197,200)"></i>
<i style="left:177.70px;top:462.74px;width:6.02px;height:6.04px;background:rgb(189,192,195)"></i>
<i style="left:183.62px;top:462.74px;width:6.02px;height:6.04px;background:rgb(172,175,178)"></i>
<i style="left:189.54px;top:462.74px;width:6.02px;height:6.04px;background:rgb(197,200,203)"></i>
<i style="left:195.46px;top:462.74px;width:6.02px;height:6.04px;background:rgb(199,202,205)"></i>
<i style="left:201.38px;top:462.74px;width:6.02px;height:6.04px;background:rgb(232,235,238)"></i>
<i style="left:213.10px;top:462.74px;width:6.07px;height:6.04px;background:rgb(192,195,198)"></i>
<i style="left:219.07px;top:462.74px;width:6.07px;height:6.04px;background:rgb(197,200,203)"></i>
<i style="left:225.04px;top:462.74px;width:6.07px;height:6.04px;background:rgb(201,204,207)"></i>
<i style="left:231.01px;top:462.74px;width:6.07px;height:6.04px;background:rgb(185,188,191)"></i>
<i style="left:236.98px;top:462.74px;width:6.07px;height:6.04px;background:rgb(230,233,236)"></i>
<i style="left:242.95px;top:462.74px;width:6.07px;height:6.04px;background:rgb(187,190,193)"></i>
<i style="left:248.92px;top:462.74px;width:6.07px;height:6.04px;background:rgb(203,206,209)"></i>
<i style="left:254.89px;top:462.74px;width:6.07px;height:6.04px;background:rgb(215,218,221)"></i>
<i style="left:260.86px;top:462.74px;width:6.07px;height:6.04px;background:rgb(200,203,206)"></i>
<i style="left:266.83px;top:462.74px;width:6.07px;height:6.04px;background:rgb(187,190,193)"></i>
<i style="left:272.80px;top:462.74px;width:6.07px;height:6.04px;background:rgb(195,198,201)"></i>
<i style="left:278.77px;top:462.74px;width:6.07px;height:6.04px;background:rgb(196,199,202)"></i>
<i style="left:284.74px;top:462.74px;width:6.07px;height:6.04px;background:rgb(197,200,203)"></i>
<i style="left:59.30px;top:480.56px;width:6.02px;height:6.04px;background:rgb(248,251,254)"></i>
<i style="left:65.22px;top:480.56px;width:6.02px;height:6.04px;background:rgb(243,246,249)"></i>
<i style="left:71.14px;top:480.56px;width:6.02px;height:6.04px;background:rgb(245,248,251)"></i>
<i style="left:77.06px;top:480.56px;width:6.02px;height:6.04px;background:rgb(242,245,248)"></i>
<i style="left:82.98px;top:480.56px;width:6.02px;height:6.04px;background:rgb(243,246,249)"></i>
<i style="left:88.90px;top:480.56px;width:6.02px;height:6.04px;background:rgb(243,246,249)"></i>
<i style="left:94.82px;top:480.56px;width:6.02px;height:6.04px;background:rgb(246,249,252)"></i>
<i style="left:100.74px;top:480.56px;width:6.02px;height:6.04px;background:rgb(245,248,251)"></i>
<i style="left:106.66px;top:480.56px;width:6.02px;height:6.04px;background:rgb(244,247,250)"></i>
<i style="left:112.58px;top:480.56px;width:6.02px;height:6.04px;background:rgb(244,247,250)"></i>
<i style="left:118.50px;top:480.56px;width:6.02px;height:6.04px;background:rgb(247,250,253)"></i>
<i style="left:124.42px;top:480.56px;width:6.02px;height:6.04px;background:rgb(246,249,252)"></i>
<i style="left:130.34px;top:480.56px;width:6.02px;height:6.04px;background:rgb(244,247,250)"></i>
<i style="left:136.26px;top:480.56px;width:6.02px;height:6.04px;background:rgb(249,252,255)"></i>
<i style="left:142.18px;top:480.56px;width:6.02px;height:6.04px;background:rgb(242,245,248)"></i>
<i style="left:148.10px;top:480.56px;width:6.02px;height:6.04px;background:rgb(245,248,251)"></i>
<i style="left:154.02px;top:480.56px;width:6.02px;height:6.04px;background:rgb(243,246,249)"></i>
<i style="left:159.94px;top:480.56px;width:6.02px;height:6.04px;background:rgb(243,246,249)"></i>
<i style="left:165.86px;top:480.56px;width:6.02px;height:6.04px;background:rgb(245,248,251)"></i>
<i style="left:171.78px;top:480.56px;width:6.02px;height:6.04px;background:rgb(245,248,251)"></i>
<i style="left:177.70px;top:480.56px;width:6.02px;height:6.04px;background:rgb(245,248,251)"></i>
<i style="left:183.62px;top:480.56px;width:6.02px;height:6.04px;background:rgb(242,245,248)"></i>
<i style="left:189.54px;top:480.56px;width:6.02px;height:6.04px;background:rgb(244,247,250)"></i>
<i style="left:195.46px;top:480.56px;width:6.02px;height:6.04px;background:rgb(244,247,250)"></i>
<i style="left:201.38px;top:480.56px;width:6.02px;height:6.04px;background:rgb(250,253,256)"></i>
<i style="left:213.10px;top:480.56px;width:6.07px;height:6.04px;background:rgb(245,248,251)"></i>
<i style="left:219.07px;top:480.56px;width:6.07px;height:6.04px;background:rgb(246,249,252)"></i>
<i style="left:225.04px;top:480.56px;width:6.07px;height:6.04px;background:rgb(244,247,250)"></i>
<i style="left:231.01px;top:480.56px;width:6.07px;height:6.04px;background:rgb(244,247,250)"></i>
<i style="left:236.98px;top:480.56px;width:6.07px;height:6.04px;background:rgb(249,252,255)"></i>
<i style="left:242.95px;top:480.56px;width:6.07px;height:6.04px;background:rgb(244,247,250)"></i>
<i style="left:248.92px;top:480.56px;width:6.07px;height:6.04px;background:rgb(245,248,251)"></i>
<i style="left:254.89px;top:480.56px;width:6.07px;height:6.04px;background:rgb(248,251,254)"></i>
<i style="left:260.86px;top:480.56px;width:6.07px;height:6.04px;background:rgb(245,248,251)"></i>
<i style="left:266.83px;top:480.56px;width:6.07px;height:6.04px;background:rgb(244,247,250)"></i>
<i style="left:272.80px;top:480.56px;width:6.07px;height:6.04px;background:rgb(245,248,251)"></i>
<i style="left:278.77px;top:480.56px;width:6.07px;height:6.04px;background:rgb(245,248,251)"></i>
<i style="left:284.74px;top:480.56px;width:6.07px;height:6.04px;background:rgb(245,248,251)"></i>
<div class="t" style="left:23.47px;top:0.04px;font-size:9.90px;line-height:11.06px;color:#1e1e22;-webkit-text-stroke:0.12px #1e1e22;transform:scaleX(0.8810);">GeStamp</div>
<div class="t" style="left:24.18px;top:9.82px;font-size:7.60px;line-height:8.49px;color:#707070;-webkit-text-stroke:0.22px #707070;transform:scaleX(0.8715);">Duty</div>
<div class="t" style="left:77.16px;top:4.94px;font-size:9.01px;line-height:10.07px;color:#363636;transform:scaleX(0.9610);">Batch</div>
<div class="t" style="left:120.76px;top:4.94px;font-size:9.01px;line-height:10.07px;color:#363636;transform:scaleX(0.9837);">Transaction</div>
<div class="t" style="left:187.00px;top:5.04px;font-size:9.01px;line-height:10.07px;color:#363636;transform:scaleX(0.9470);">Paper Stamp Duty</div>
<div class="t" style="left:278.00px;top:5.04px;font-size:9.01px;line-height:10.07px;color:#363636;transform:scaleX(0.9775);">Administrator</div>
<div class="t" style="left:793.80px;top:1.62px;font-size:6.83px;line-height:7.63px;color:#ffffff;transform:scaleX(0.8802);">2718</div>
<div class="t" style="left:938.71px;top:2.07px;font-size:7.99px;line-height:8.93px;color:#4a4a55;transform:scaleX(1.0393);">GeStampDuty</div>
<div class="t" style="left:938.78px;top:13.41px;font-size:5.96px;line-height:6.66px;color:#a5a5c3;transform:scaleX(0.9973);">Ginkgo Soft Co., Ltd.</div>
<div class="t" style="left:10.00px;top:39.43px;font-size:11.40px;line-height:12.73px;color:#3e3f4d;-webkit-text-stroke:0.45px #3e3f4d;transform:scaleX(1.0636);">Transaction</div>
<div class="t" style="left:10.00px;top:56.77px;font-size:7.99px;line-height:8.93px;color:#bdbdca;transform:scaleX(0.9788);">Search, View and Export your e-Stamp duty data.</div>
<div class="t" style="left:183.80px;top:56.77px;font-size:7.99px;line-height:8.93px;color:#6b96f0;transform:scaleX(0.9434);">Learn More</div>
<div class="t" style="left:34.00px;top:90.89px;font-size:7.41px;line-height:8.28px;color:#ffffff;font-weight:700;transform:scaleX(0.8767);">FILTER</div>
<div class="t" style="left:108.25px;top:90.89px;font-size:7.41px;line-height:8.28px;color:#ffffff;font-weight:700;transform:scaleX(0.9249);">BATCH ID</div>
<div class="t" style="left:196.00px;top:90.89px;font-size:7.41px;line-height:8.28px;color:#353535;-webkit-text-stroke:0.2px #353535;transform:scaleX(0.8697);">SEARCH</div>
<div class="t" style="left:19.64px;top:119.98px;font-size:8.87px;line-height:9.90px;color:#414252;transform:scaleX(1.1259);">Total Document</div>
<div class="t" style="left:18.78px;top:133.20px;font-size:10.61px;line-height:11.85px;color:#3b3c4a;font-weight:700;transform:scaleX(0.9015);">100,072</div>
<div class="t" style="left:193.22px;top:119.98px;font-size:8.87px;line-height:9.90px;color:#414252;transform:scaleX(1.1359);">Total Inst Amount</div>
<div class="t" style="left:194.17px;top:133.20px;font-size:10.61px;line-height:11.85px;color:#3b3c4a;font-weight:700;transform:scaleX(0.8904);">10,011,007,415,300.00</div>
<div class="t" style="left:367.74px;top:119.98px;font-size:8.87px;line-height:9.90px;color:#414252;transform:scaleX(1.1392);">Total Paid Amount</div>
<div class="t" style="left:367.71px;top:133.20px;font-size:10.61px;line-height:11.85px;color:#3b3c4a;font-weight:700;transform:scaleX(0.9597);">2,002,937.00</div>
<div class="t" style="left:901.00px;top:129.30px;font-size:7.85px;line-height:8.77px;color:#f4f8ff;transform:scaleX(0.7980);">EXPORT</div>
<div class="t" style="left:954.79px;top:129.30px;font-size:7.85px;line-height:8.77px;color:#f4f8ff;transform:scaleX(0.7835);">EXPORT ALL</div>
<div class="t" style="left:887.00px;top:146.08px;font-size:6.10px;line-height:6.82px;color:#c3c3cf;transform:scaleX(1.0466);">Max records per download.</div>
<div class="t" style="left:47.00px;top:194.70px;font-size:7.85px;line-height:8.77px;color:#8d8d98;transform:scaleX(0.9565);">No.</div>
<div class="t" style="left:106.71px;top:194.70px;font-size:7.85px;line-height:8.77px;color:#8d8d98;transform:scaleX(1.0105);">E-Document No.</div>
<div class="t" style="left:232.73px;top:194.70px;font-size:7.85px;line-height:8.77px;color:#8d8d98;transform:scaleX(1.0240);">Contract No.</div>
<div class="t" style="left:299.25px;top:194.70px;font-size:7.85px;line-height:8.77px;color:#8d8d98;transform:scaleX(1.0233);">Creation Date</div>
<div class="t" style="left:358.25px;top:194.70px;font-size:7.85px;line-height:8.77px;color:#8d8d98;transform:scaleX(1.0188);">Status</div>
<div class="t" style="left:390.78px;top:194.70px;font-size:7.85px;line-height:8.77px;color:#8d8d98;transform:scaleX(1.0048);">Select Type</div>
<div class="t" style="left:436.72px;top:194.70px;font-size:7.85px;line-height:8.77px;color:#8d8d98;transform:scaleX(0.9826);">Type Code</div>
<div class="t" style="left:478.82px;top:194.70px;font-size:7.85px;line-height:8.77px;color:#8d8d98;transform:scaleX(0.9985);">Effective Date</div>
<div class="t" style="left:533.00px;top:194.70px;font-size:7.85px;line-height:8.77px;color:#8d8d98;transform:scaleX(0.9562);">Expire Date</div>
<div class="t" style="left:578.21px;top:194.70px;font-size:7.85px;line-height:8.77px;color:#8d8d98;transform:scaleX(0.9633);">Receive Date</div>
<div class="t" style="left:627.71px;top:194.70px;font-size:7.85px;line-height:8.77px;color:#8d8d98;transform:scaleX(0.9842);">Send Form Type</div>
<div class="t" style="left:689.21px;top:194.70px;font-size:7.85px;line-height:8.77px;color:#8d8d98;transform:scaleX(0.9669);">Filing No.</div>
<div class="t" style="left:726.21px;top:194.70px;font-size:7.85px;line-height:8.77px;color:#8d8d98;transform:scaleX(1.0150);">Overdue flag</div>
<div class="t" style="left:775.47px;top:194.70px;font-size:7.85px;line-height:8.77px;color:#8d8d98;transform:scaleX(1.0230);">No. of Duplicated Contract</div>
<div class="t" style="left:873.70px;top:194.70px;font-size:7.85px;line-height:8.77px;color:#8d8d98;transform:scaleX(0.9963);">Referred E-Document No.</div>
<div class="t" style="left:969.00px;top:194.70px;font-size:7.85px;line-height:8.77px;color:#8d8d98;">Referred Contract No.</div>
<div class="t" style="left:121.87px;top:490.27px;font-size:7.99px;line-height:8.93px;color:#8ba7ef;z-index:21;transform:scaleX(0.9110);">© 2023 Ginkgo Soft Co., Ltd.</div>
<div class="t" style="left:487.32px;top:490.23px;font-size:8.14px;line-height:9.09px;color:#c7c7c7;z-index:21;transform:scaleX(0.8741);">Version 1.8</div>
<div class="t" style="left:787.36px;top:490.17px;font-size:8.43px;line-height:9.42px;color:#7d9ff0;z-index:21;transform:scaleX(0.8804);">Privacy Policy</div>
<div class="t" style="left:837.00px;top:487.52px;font-size:9.59px;line-height:10.72px;color:#444444;z-index:21;transform:scaleX(0.6195);">|</div>
<div class="t" style="left:840.35px;top:490.17px;font-size:8.43px;line-height:9.42px;color:#7d9ff0;z-index:21;transform:scaleX(0.9322);">Terms and Conditions</div>
<div class="t" style="left:50.37px;top:219.83px;font-size:7.70px;line-height:8.60px;color:#50505c;transform:scaleX(0.9000);">1</div>
<div class="t" style="left:303.27px;top:219.83px;font-size:7.70px;line-height:8.60px;color:#50505c;transform:scaleX(1.0642);">2025-09-29</div>
<div class="t" style="left:352.66px;top:219.83px;font-size:7.70px;line-height:8.60px;color:#50505c;transform:scaleX(1.0343);">Preparing</div>
<div class="t" style="left:410.00px;top:219.83px;font-size:7.70px;line-height:8.60px;color:#50505c;transform:scaleX(0.7431);">E</div>
<div class="t" style="left:453.21px;top:219.83px;font-size:7.70px;line-height:8.60px;color:#50505c;transform:scaleX(0.8880);">6</div>
<div class="t" style="left:482.39px;top:219.83px;font-size:7.70px;line-height:8.60px;color:#50505c;transform:scaleX(1.0507);">2025-09-29</div>
<div class="t" style="left:531.71px;top:219.83px;font-size:7.70px;line-height:8.60px;color:#50505c;transform:scaleX(1.0643);">2026-09-29</div>
<div class="t" style="left:703.00px;top:219.83px;font-size:7.70px;line-height:8.60px;color:#50505c;transform:scaleX(0.7975);">0</div>
<div class="t" style="left:747.00px;top:219.83px;font-size:7.70px;line-height:8.60px;color:#50505c;transform:scaleX(0.7491);">0</div>
<div class="t" style="left:820.71px;top:219.83px;font-size:7.70px;line-height:8.60px;color:#50505c;transform:scaleX(1.0150);">0</div>
<div class="t" style="left:50.37px;top:246.14px;font-size:7.70px;line-height:8.60px;color:#50505c;transform:scaleX(0.9000);">2</div>
<div class="t" style="left:303.27px;top:246.14px;font-size:7.70px;line-height:8.60px;color:#50505c;transform:scaleX(1.0642);">2025-09-29</div>
<div class="t" style="left:352.66px;top:246.14px;font-size:7.70px;line-height:8.60px;color:#50505c;transform:scaleX(1.0343);">Preparing</div>
<div class="t" style="left:410.00px;top:246.14px;font-size:7.70px;line-height:8.60px;color:#50505c;transform:scaleX(0.7431);">E</div>
<div class="t" style="left:453.21px;top:246.14px;font-size:7.70px;line-height:8.60px;color:#50505c;transform:scaleX(0.8880);">6</div>
<div class="t" style="left:482.39px;top:246.14px;font-size:7.70px;line-height:8.60px;color:#50505c;transform:scaleX(1.0507);">2025-09-29</div>
<div class="t" style="left:531.71px;top:246.14px;font-size:7.70px;line-height:8.60px;color:#50505c;transform:scaleX(1.0643);">2026-09-29</div>
<div class="t" style="left:703.00px;top:246.14px;font-size:7.70px;line-height:8.60px;color:#50505c;transform:scaleX(0.7975);">0</div>
<div class="t" style="left:747.00px;top:246.14px;font-size:7.70px;line-height:8.60px;color:#50505c;transform:scaleX(0.7491);">0</div>
<div class="t" style="left:820.71px;top:246.14px;font-size:7.70px;line-height:8.60px;color:#50505c;transform:scaleX(1.0150);">0</div>
<div class="t" style="left:50.37px;top:272.45px;font-size:7.70px;line-height:8.60px;color:#50505c;transform:scaleX(0.9000);">3</div>
<div class="t" style="left:303.27px;top:272.45px;font-size:7.70px;line-height:8.60px;color:#50505c;transform:scaleX(1.0642);">2025-09-29</div>
<div class="t" style="left:352.66px;top:272.45px;font-size:7.70px;line-height:8.60px;color:#50505c;transform:scaleX(1.0343);">Preparing</div>
<div class="t" style="left:410.00px;top:272.45px;font-size:7.70px;line-height:8.60px;color:#50505c;transform:scaleX(0.7431);">E</div>
<div class="t" style="left:453.21px;top:272.45px;font-size:7.70px;line-height:8.60px;color:#50505c;transform:scaleX(0.8880);">6</div>
<div class="t" style="left:482.39px;top:272.45px;font-size:7.70px;line-height:8.60px;color:#50505c;transform:scaleX(1.0507);">2025-09-29</div>
<div class="t" style="left:531.71px;top:272.45px;font-size:7.70px;line-height:8.60px;color:#50505c;transform:scaleX(1.0643);">2026-09-29</div>
<div class="t" style="left:703.00px;top:272.45px;font-size:7.70px;line-height:8.60px;color:#50505c;transform:scaleX(0.7975);">0</div>
<div class="t" style="left:747.00px;top:272.45px;font-size:7.70px;line-height:8.60px;color:#50505c;transform:scaleX(0.7491);">0</div>
<div class="t" style="left:820.71px;top:272.45px;font-size:7.70px;line-height:8.60px;color:#50505c;transform:scaleX(1.0150);">0</div>
<div class="t" style="left:50.37px;top:298.76px;font-size:7.70px;line-height:8.60px;color:#50505c;transform:scaleX(0.9000);">4</div>
<div class="t" style="left:303.27px;top:298.76px;font-size:7.70px;line-height:8.60px;color:#50505c;transform:scaleX(1.0642);">2025-09-29</div>
<div class="t" style="left:352.66px;top:298.76px;font-size:7.70px;line-height:8.60px;color:#50505c;transform:scaleX(1.0343);">Preparing</div>
<div class="t" style="left:410.00px;top:298.76px;font-size:7.70px;line-height:8.60px;color:#50505c;transform:scaleX(0.7431);">E</div>
<div class="t" style="left:453.21px;top:298.76px;font-size:7.70px;line-height:8.60px;color:#50505c;transform:scaleX(0.8880);">6</div>
<div class="t" style="left:482.39px;top:298.76px;font-size:7.70px;line-height:8.60px;color:#50505c;transform:scaleX(1.0507);">2025-09-29</div>
<div class="t" style="left:531.71px;top:298.76px;font-size:7.70px;line-height:8.60px;color:#50505c;transform:scaleX(1.0643);">2026-09-29</div>
<div class="t" style="left:703.00px;top:298.76px;font-size:7.70px;line-height:8.60px;color:#50505c;transform:scaleX(0.7975);">0</div>
<div class="t" style="left:747.00px;top:298.76px;font-size:7.70px;line-height:8.60px;color:#50505c;transform:scaleX(0.7491);">0</div>
<div class="t" style="left:820.71px;top:298.76px;font-size:7.70px;line-height:8.60px;color:#50505c;transform:scaleX(1.0150);">0</div>
<div class="t" style="left:50.37px;top:325.07px;font-size:7.70px;line-height:8.60px;color:#50505c;transform:scaleX(0.9000);">5</div>
<div class="t" style="left:303.27px;top:325.07px;font-size:7.70px;line-height:8.60px;color:#50505c;transform:scaleX(1.0642);">2025-09-29</div>
<div class="t" style="left:352.66px;top:325.07px;font-size:7.70px;line-height:8.60px;color:#50505c;transform:scaleX(1.0343);">Preparing</div>
<div class="t" style="left:410.00px;top:325.07px;font-size:7.70px;line-height:8.60px;color:#50505c;transform:scaleX(0.7431);">E</div>
<div class="t" style="left:453.21px;top:325.07px;font-size:7.70px;line-height:8.60px;color:#50505c;transform:scaleX(0.8880);">6</div>
<div class="t" style="left:482.39px;top:325.07px;font-size:7.70px;line-height:8.60px;color:#50505c;transform:scaleX(1.0507);">2025-09-29</div>
<div class="t" style="left:531.71px;top:325.07px;font-size:7.70px;line-height:8.60px;color:#50505c;transform:scaleX(1.0643);">2026-09-29</div>
<div class="t" style="left:703.00px;top:325.07px;font-size:7.70px;line-height:8.60px;color:#50505c;transform:scaleX(0.7975);">0</div>
<div class="t" style="left:747.00px;top:325.07px;font-size:7.70px;line-height:8.60px;color:#50505c;transform:scaleX(0.7491);">0</div>
<div class="t" style="left:820.71px;top:325.07px;font-size:7.70px;line-height:8.60px;color:#50505c;transform:scaleX(1.0150);">0</div>
<div class="t" style="left:50.37px;top:351.38px;font-size:7.70px;line-height:8.60px;color:#50505c;transform:scaleX(0.9000);">6</div>
<div class="t" style="left:303.27px;top:351.38px;font-size:7.70px;line-height:8.60px;color:#50505c;transform:scaleX(1.0642);">2025-09-29</div>
<div class="t" style="left:352.66px;top:351.38px;font-size:7.70px;line-height:8.60px;color:#50505c;transform:scaleX(1.0343);">Preparing</div>
<div class="t" style="left:410.00px;top:351.38px;font-size:7.70px;line-height:8.60px;color:#50505c;transform:scaleX(0.7431);">E</div>
<div class="t" style="left:453.21px;top:351.38px;font-size:7.70px;line-height:8.60px;color:#50505c;transform:scaleX(0.8880);">6</div>
<div class="t" style="left:482.39px;top:351.38px;font-size:7.70px;line-height:8.60px;color:#50505c;transform:scaleX(1.0507);">2025-09-29</div>
<div class="t" style="left:531.71px;top:351.38px;font-size:7.70px;line-height:8.60px;color:#50505c;transform:scaleX(1.0643);">2026-09-29</div>
<div class="t" style="left:703.00px;top:351.38px;font-size:7.70px;line-height:8.60px;color:#50505c;transform:scaleX(0.7975);">0</div>
<div class="t" style="left:747.00px;top:351.38px;font-size:7.70px;line-height:8.60px;color:#50505c;transform:scaleX(0.7491);">0</div>
<div class="t" style="left:820.71px;top:351.38px;font-size:7.70px;line-height:8.60px;color:#50505c;transform:scaleX(1.0150);">0</div>
<div class="t" style="left:50.37px;top:377.69px;font-size:7.70px;line-height:8.60px;color:#50505c;transform:scaleX(0.9000);">7</div>
<div class="t" style="left:303.27px;top:377.69px;font-size:7.70px;line-height:8.60px;color:#50505c;transform:scaleX(1.0642);">2025-09-29</div>
<div class="t" style="left:352.66px;top:377.69px;font-size:7.70px;line-height:8.60px;color:#50505c;transform:scaleX(1.0343);">Preparing</div>
<div class="t" style="left:410.00px;top:377.69px;font-size:7.70px;line-height:8.60px;color:#50505c;transform:scaleX(0.7431);">E</div>
<div class="t" style="left:453.21px;top:377.69px;font-size:7.70px;line-height:8.60px;color:#50505c;transform:scaleX(0.8880);">6</div>
<div class="t" style="left:482.39px;top:377.69px;font-size:7.70px;line-height:8.60px;color:#50505c;transform:scaleX(1.0507);">2025-09-29</div>
<div class="t" style="left:531.71px;top:377.69px;font-size:7.70px;line-height:8.60px;color:#50505c;transform:scaleX(1.0643);">2026-09-29</div>
<div class="t" style="left:703.00px;top:377.69px;font-size:7.70px;line-height:8.60px;color:#50505c;transform:scaleX(0.7975);">0</div>
<div class="t" style="left:747.00px;top:377.69px;font-size:7.70px;line-height:8.60px;color:#50505c;transform:scaleX(0.7491);">0</div>
<div class="t" style="left:820.71px;top:377.69px;font-size:7.70px;line-height:8.60px;color:#50505c;transform:scaleX(1.0150);">0</div>
<div class="t" style="left:50.37px;top:404.00px;font-size:7.70px;line-height:8.60px;color:#50505c;transform:scaleX(0.9000);">8</div>
<div class="t" style="left:303.27px;top:404.00px;font-size:7.70px;line-height:8.60px;color:#50505c;transform:scaleX(1.0642);">2025-09-29</div>
<div class="t" style="left:352.66px;top:404.00px;font-size:7.70px;line-height:8.60px;color:#50505c;transform:scaleX(1.0343);">Preparing</div>
<div class="t" style="left:410.00px;top:404.00px;font-size:7.70px;line-height:8.60px;color:#50505c;transform:scaleX(0.7431);">E</div>
<div class="t" style="left:453.21px;top:404.00px;font-size:7.70px;line-height:8.60px;color:#50505c;transform:scaleX(0.8880);">6</div>
<div class="t" style="left:482.39px;top:404.00px;font-size:7.70px;line-height:8.60px;color:#50505c;transform:scaleX(1.0507);">2025-09-29</div>
<div class="t" style="left:531.71px;top:404.00px;font-size:7.70px;line-height:8.60px;color:#50505c;transform:scaleX(1.0643);">2026-09-29</div>
<div class="t" style="left:703.00px;top:404.00px;font-size:7.70px;line-height:8.60px;color:#50505c;transform:scaleX(0.7975);">0</div>
<div class="t" style="left:747.00px;top:404.00px;font-size:7.70px;line-height:8.60px;color:#50505c;transform:scaleX(0.7491);">0</div>
<div class="t" style="left:820.71px;top:404.00px;font-size:7.70px;line-height:8.60px;color:#50505c;transform:scaleX(1.0150);">0</div>
<div class="t" style="left:50.37px;top:430.31px;font-size:7.70px;line-height:8.60px;color:#50505c;transform:scaleX(0.9000);">9</div>
<div class="t" style="left:303.27px;top:430.31px;font-size:7.70px;line-height:8.60px;color:#50505c;transform:scaleX(1.0642);">2025-09-29</div>
<div class="t" style="left:352.66px;top:430.31px;font-size:7.70px;line-height:8.60px;color:#50505c;transform:scaleX(1.0343);">Preparing</div>
<div class="t" style="left:410.00px;top:430.31px;font-size:7.70px;line-height:8.60px;color:#50505c;transform:scaleX(0.7431);">E</div>
<div class="t" style="left:453.21px;top:430.31px;font-size:7.70px;line-height:8.60px;color:#50505c;transform:scaleX(0.8880);">6</div>
<div class="t" style="left:482.39px;top:430.31px;font-size:7.70px;line-height:8.60px;color:#50505c;transform:scaleX(1.0507);">2025-09-29</div>
<div class="t" style="left:531.71px;top:430.31px;font-size:7.70px;line-height:8.60px;color:#50505c;transform:scaleX(1.0643);">2026-09-29</div>
<div class="t" style="left:703.00px;top:430.31px;font-size:7.70px;line-height:8.60px;color:#50505c;transform:scaleX(0.7975);">0</div>
<div class="t" style="left:747.00px;top:430.31px;font-size:7.70px;line-height:8.60px;color:#50505c;transform:scaleX(0.7491);">0</div>
<div class="t" style="left:820.71px;top:430.31px;font-size:7.70px;line-height:8.60px;color:#50505c;transform:scaleX(1.0150);">0</div>
<div class="t" style="left:48.45px;top:456.62px;font-size:7.70px;line-height:8.60px;color:#50505c;transform:scaleX(0.9000);">10</div>
<div class="t" style="left:303.27px;top:456.62px;font-size:7.70px;line-height:8.60px;color:#50505c;transform:scaleX(1.0642);">2025-09-29</div>
<div class="t" style="left:352.66px;top:456.62px;font-size:7.70px;line-height:8.60px;color:#50505c;transform:scaleX(1.0343);">Preparing</div>
<div class="t" style="left:410.00px;top:456.62px;font-size:7.70px;line-height:8.60px;color:#50505c;transform:scaleX(0.7431);">E</div>
<div class="t" style="left:453.21px;top:456.62px;font-size:7.70px;line-height:8.60px;color:#50505c;transform:scaleX(0.8880);">6</div>
<div class="t" style="left:482.39px;top:456.62px;font-size:7.70px;line-height:8.60px;color:#50505c;transform:scaleX(1.0507);">2025-09-29</div>
<div class="t" style="left:531.71px;top:456.62px;font-size:7.70px;line-height:8.60px;color:#50505c;transform:scaleX(1.0643);">2026-09-29</div>
<div class="t" style="left:703.00px;top:456.62px;font-size:7.70px;line-height:8.60px;color:#50505c;transform:scaleX(0.7975);">0</div>
<div class="t" style="left:747.00px;top:456.62px;font-size:7.70px;line-height:8.60px;color:#50505c;transform:scaleX(0.7491);">0</div>
<div class="t" style="left:820.71px;top:456.62px;font-size:7.70px;line-height:8.60px;color:#50505c;transform:scaleX(1.0150);">0</div>
<div class="t" style="left:48.45px;top:482.93px;font-size:7.70px;line-height:8.60px;color:#50505c;transform:scaleX(0.9000);">11</div>
<div class="t" style="left:303.27px;top:482.93px;font-size:7.70px;line-height:8.60px;color:#50505c;transform:scaleX(1.0642);">2025-09-29</div>
<div class="t" style="left:352.66px;top:482.93px;font-size:7.70px;line-height:8.60px;color:#50505c;transform:scaleX(1.0343);">Preparing</div>
<div class="t" style="left:410.00px;top:482.93px;font-size:7.70px;line-height:8.60px;color:#50505c;transform:scaleX(0.7431);">E</div>
<div class="t" style="left:453.21px;top:482.93px;font-size:7.70px;line-height:8.60px;color:#50505c;transform:scaleX(0.8880);">6</div>
<div class="t" style="left:482.39px;top:482.93px;font-size:7.70px;line-height:8.60px;color:#50505c;transform:scaleX(1.0507);">2025-09-29</div>
<div class="t" style="left:531.71px;top:482.93px;font-size:7.70px;line-height:8.60px;color:#50505c;transform:scaleX(1.0643);">2026-09-29</div>
<div class="t" style="left:703.00px;top:482.93px;font-size:7.70px;line-height:8.60px;color:#50505c;transform:scaleX(0.7975);">0</div>
<div class="t" style="left:747.00px;top:482.93px;font-size:7.70px;line-height:8.60px;color:#50505c;transform:scaleX(0.7491);">0</div>
<div class="t" style="left:820.71px;top:482.93px;font-size:7.70px;line-height:8.60px;color:#50505c;transform:scaleX(1.0150);">0</div>
<div id="footer">
</div>
</body></html>
